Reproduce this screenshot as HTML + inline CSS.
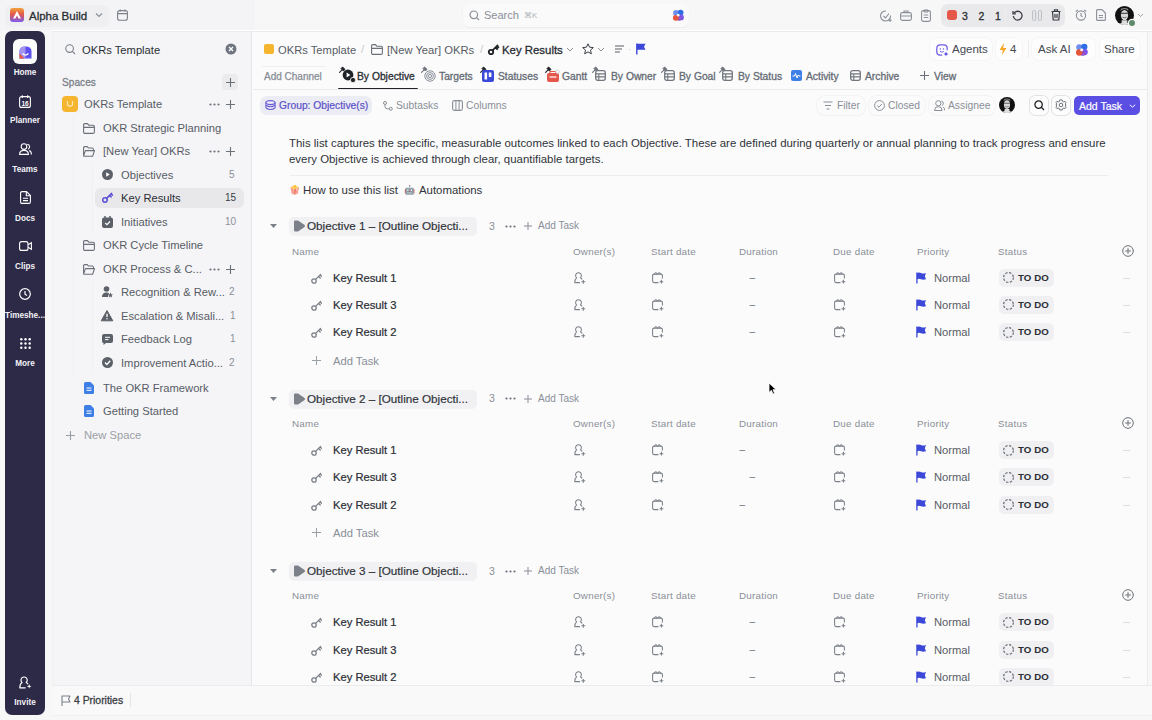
<!DOCTYPE html><html><head><meta charset="utf-8"><style>
html,body{margin:0;padding:0}
body{width:1152px;height:720px;overflow:hidden;position:relative;background:#f7f7f8;font-family:"Liberation Sans",sans-serif;}
.a{position:absolute;white-space:nowrap}
svg.a{overflow:visible}
</style></head><body>
<div class="a" style="left:0px;top:0px;width:255px;height:30px;background:#f4f4f6;"></div>
<div class="a" style="left:5px;top:5px;width:104px;height:22px;background:#efeff1;border-radius:6px"></div>
<svg class="a" style="left:10px;top:8px;" width="14" height="14" viewBox="0 0 14 14" fill="none"><defs><linearGradient id="lg" x1="0" y1="0" x2="0" y2="1"><stop offset="0" stop-color="#f2a33a"/><stop offset=".45" stop-color="#e2574c"/><stop offset="1" stop-color="#7b5cf0"/></linearGradient></defs><rect width="14" height="14" rx="3" fill="url(#lg)"/><path d="M7 3 L11 10.5 L8.6 10.5 L7 7.6 L5.4 10.5 L3 10.5Z" fill="#fff"/></svg>
<div class="a" style="left:29px;top:8.0px;font-size:11.5px;line-height:16px;font-weight:400;color:#2a2e34;-webkit-text-stroke:0.3px currentColor;">Alpha Build</div>
<svg class="a" style="left:95px;top:12px;" width="8" height="6" viewBox="0 0 8 6" fill="none"><path d="M1 1.5 L4 4.5 L7 1.5" stroke="#8a8f98" stroke-width="1.1"/></svg>
<svg class="a" style="left:117px;top:9px;" width="11" height="12" viewBox="0 0 11 12" fill="none"><rect x="0.6" y="1.6" width="9.8" height="9.6" rx="2" stroke="#7b8089" stroke-width="1.1"/><path d="M0.6 4.6 H10.4 M3.2 0.4 V2.4 M7.8 0.4 V2.4" stroke="#7b8089" stroke-width="1.1"/></svg>
<div class="a" style="left:463px;top:4px;width:226px;height:23px;background:#fafafa;border-radius:6px;box-shadow:0 0.5px 0 0.3px #ececee"></div>
<svg class="a" style="left:469px;top:10px;" width="11" height="11" viewBox="0 0 11 11" fill="none"><circle cx="4.8" cy="4.8" r="3.8" stroke="#8a8f98" stroke-width="1.2"/><path d="M7.6 7.6 L10 10" stroke="#8a8f98" stroke-width="1.2"/></svg>
<div class="a" style="left:484px;top:8.0px;font-size:11px;line-height:15px;font-weight:400;color:#8a8f98;">Search</div>
<div class="a" style="left:524px;top:10.0px;font-size:8px;line-height:11px;font-weight:400;color:#b0b4ba;">⌘K</div>
<svg class="a" style="left:672px;top:9px;" width="12.5" height="12.5" viewBox="0 0 12.5 12.5" fill="none"><g transform="scale(1.0)"><circle cx="4" cy="4" r="2.9" fill="#6f8ff0"/><circle cx="8.6" cy="3.6" r="2.9" fill="#2f6de6"/><circle cx="9" cy="8.4" r="2.9" fill="#7c55ea"/><circle cx="7" cy="9.4" r="2.4" fill="#9152c8"/><circle cx="3.8" cy="8.8" r="2.9" fill="#e4553a"/><circle cx="6.2" cy="6.2" r="1.4" fill="#f4f2ff"/></g></svg>
<svg class="a" style="left:880px;top:10px;" width="12" height="12" viewBox="0 0 12 12" fill="none"><path d="M10.5 5.5 A5 5 0 1 1 6 1" stroke="#8a8f98" stroke-width="1.1"/><path d="M3.5 6 L5.5 8 L9 3.5" stroke="#8a8f98" stroke-width="1.1"/><path d="M10 8.5 V12 M8.3 10.2 H11.7" stroke="#8a8f98" stroke-width="1.1"/></svg>
<svg class="a" style="left:900px;top:10px;" width="12" height="11" viewBox="0 0 12 11" fill="none"><rect x="0.6" y="2.6" width="10.8" height="7.8" rx="1.8" stroke="#8a8f98" stroke-width="1.1"/><path d="M4 2.6 V1 H8 V2.6 M0.6 6 H11.4" stroke="#8a8f98" stroke-width="1.1"/></svg>
<svg class="a" style="left:921px;top:9px;" width="10" height="13" viewBox="0 0 10 13" fill="none"><rect x="0.6" y="1.6" width="8.8" height="10.8" rx="1.6" stroke="#8a8f98" stroke-width="1.1"/><path d="M3 1 H7 V3 H3Z M2.8 6 H7.2 M2.8 8.5 H7.2" stroke="#8a8f98" stroke-width="1"/></svg>
<div class="a" style="left:941px;top:4px;width:124px;height:23px;background:#e9e9eb;border-radius:7px"></div>
<div class="a" style="left:1005px;top:4px;width:1px;height:23px;background:#ededef;"></div>
<div class="a" style="left:947px;top:10px;width:10px;height:10px;background:#e5574b;border-radius:3px"></div>
<div class="a" style="left:962px;top:8.5px;font-size:10.5px;line-height:15px;font-weight:400;color:#2a2e34;-webkit-text-stroke:0.3px currentColor;">3</div>
<div class="a" style="left:978.5px;top:8.5px;font-size:10.5px;line-height:15px;font-weight:400;color:#2a2e34;-webkit-text-stroke:0.3px currentColor;">2</div>
<div class="a" style="left:995px;top:8.5px;font-size:10.5px;line-height:15px;font-weight:400;color:#2a2e34;-webkit-text-stroke:0.3px currentColor;">1</div>
<svg class="a" style="left:1012px;top:10px;" width="11" height="11" viewBox="0 0 11 11" fill="none"><path d="M2 3.2 A4.4 4.4 0 1 1 1.3 6.2" stroke="#3a3e44" stroke-width="1.3"/><path d="M1 1 V3.8 H3.8" stroke="#3a3e44" stroke-width="1.3"/></svg>
<svg class="a" style="left:1032px;top:10px;" width="10" height="11" viewBox="0 0 10 11" fill="none"><rect x="0.6" y="0.6" width="3" height="9.8" rx="1" stroke="#b9bcc2" stroke-width="1"/><rect x="6.4" y="0.6" width="3" height="9.8" rx="1" stroke="#b9bcc2" stroke-width="1"/></svg>
<svg class="a" style="left:1051px;top:9px;" width="10" height="12" viewBox="0 0 10 12" fill="none"><path d="M0.5 2.5 H9.5 M3.5 2.5 V0.8 H6.5 V2.5 M1.5 2.5 L2.2 11 H7.8 L8.5 2.5 M4 5 V9 M6 5 V9" stroke="#3a3e44" stroke-width="1.2"/></svg>
<svg class="a" style="left:1075px;top:9px;" width="12" height="12" viewBox="0 0 12 12" fill="none"><circle cx="6" cy="6.5" r="4.6" stroke="#8a8f98" stroke-width="1.1"/><path d="M6 4 V6.7 L7.6 7.8 M0.8 2.5 L2.8 0.8 M11.2 2.5 L9.2 0.8" stroke="#8a8f98" stroke-width="1.1"/></svg>
<svg class="a" style="left:1096px;top:9px;" width="10" height="12" viewBox="0 0 10 12" fill="none"><path d="M0.6 1.6 Q0.6 0.6 1.6 0.6 H6 L9.4 4 V10.4 Q9.4 11.4 8.4 11.4 H1.6 Q0.6 11.4 0.6 10.4Z" stroke="#8a8f98" stroke-width="1.1"/><path d="M2.8 6.5 H7 M2.8 8.6 H7" stroke="#8a8f98" stroke-width="1"/></svg>
<svg class="a" style="left:1115px;top:5.5px;" width="19" height="19" viewBox="0 0 19 19" fill="none"><defs><clipPath id="avc1115"><circle cx="10" cy="10" r="10"/></clipPath></defs><g transform="scale(0.95)" clip-path="url(#avc1115)"><rect width="20" height="20" fill="#111"/><path d="M3 20 Q10 14 17 20Z" fill="#e6e6e6"/><rect x="7" y="15" width="6" height="5" fill="#ddd"/><ellipse cx="10" cy="9.5" rx="3.8" ry="5.4" fill="#d8d8d8"/><path d="M6.4 7.8 H13.6" stroke="#555" stroke-width="1.2"/><path d="M7.8 11.8 Q10 13 12.2 11.8" stroke="#666" stroke-width="0.9"/><path d="M6 5 Q10 1.5 14 5 L14 3.2 Q10 0.8 6 3.2Z" fill="#888"/></g></svg>
<div class="a" style="left:1128.5px;top:19.5px;width:6px;height:6px;background:#5f8a6c;border-radius:50%;box-shadow:0 0 0 1.2px #f6f6f7"></div>
<svg class="a" style="left:1137px;top:13px;" width="7" height="5" viewBox="0 0 7 5" fill="none"><path d="M1 1 L3.5 3.5 L6 1" stroke="#9a9ea5" stroke-width="1"/></svg>
<div class="a" style="left:5px;top:31px;width:40px;height:684px;background:#2d2a48;border-radius:7px"></div>
<div class="a" style="left:13px;top:39px;width:24px;height:25px;background:#fbfbfc;border-radius:6px"></div>
<svg class="a" style="left:19px;top:45.5px;" width="13" height="13" viewBox="0 0 13 13" fill="none"><path d="M0.5 12.5 V5.5 Q0.5 0.5 6.5 0.5 Q12.5 0.5 12.5 5.5 V12.5Z" fill="#5d50ef"/><path d="M0.5 12.5 V5.5 Q0.5 0.5 6.5 0.5 V12.5Z" fill="#a393f0"/><path d="M0.5 7.5 L5.5 12.5 H0.5Z" fill="#e85a3a"/><path d="M3.6 7.6 Q6.5 10.6 9.4 7.6" stroke="#fff" stroke-width="1.4"/></svg>
<div class="a" style="left:0px;top:67.7px;font-size:8.2px;line-height:10px;font-weight:700;color:#f2f2f6;width:50px;text-align:center">Home</div>
<svg class="a" style="left:19px;top:95px;" width="12" height="13" viewBox="0 0 12 13" fill="none"><rect x="0.6" y="1.6" width="10.8" height="10.8" rx="2" stroke="#fff" stroke-width="1.1"/><path d="M3.3 0.3 V3 M8.7 0.3 V3" stroke="#fff" stroke-width="1.1"/><text x="6" y="10.5" font-size="6.5" font-weight="700" fill="#fff" text-anchor="middle" font-family="Liberation Sans">16</text></svg>
<div class="a" style="left:0px;top:115.7px;font-size:8.2px;line-height:10px;font-weight:700;color:#f2f2f6;width:50px;text-align:center">Planner</div>
<svg class="a" style="left:19px;top:143px;" width="13" height="12" viewBox="0 0 13 12" fill="none"><circle cx="5" cy="3.6" r="2.8" stroke="#fff" stroke-width="1.1"/><path d="M0.6 11.4 Q0.6 7.4 5 7.4 Q9.4 7.4 9.4 11.4Z" stroke="#fff" stroke-width="1.1"/><path d="M8.2 1.2 A2.6 2.6 0 0 1 9 6.2 M10.2 7.6 Q12.4 8.4 12.4 11.4" stroke="#fff" stroke-width="1.1"/></svg>
<div class="a" style="left:0px;top:164.7px;font-size:8.2px;line-height:10px;font-weight:700;color:#f2f2f6;width:50px;text-align:center">Teams</div>
<svg class="a" style="left:20px;top:191px;" width="11" height="13" viewBox="0 0 11 13" fill="none"><path d="M0.6 2 Q0.6 0.6 2 0.6 H6.5 L10.4 4.5 V11 Q10.4 12.4 9 12.4 H2 Q0.6 12.4 0.6 11Z" stroke="#fff" stroke-width="1.1"/><path d="M6.3 0.8 V4.7 H10.2 M3 7.2 H8 M3 9.6 H8" stroke="#fff" stroke-width="1.1"/></svg>
<div class="a" style="left:0px;top:213.7px;font-size:8.2px;line-height:10px;font-weight:700;color:#f2f2f6;width:50px;text-align:center">Docs</div>
<svg class="a" style="left:19px;top:241px;" width="13" height="10" viewBox="0 0 13 10" fill="none"><rect x="0.6" y="0.6" width="8.4" height="8.8" rx="2" stroke="#fff" stroke-width="1.1"/><path d="M9 3.8 L12.4 1.8 V8.2 L9 6.2" stroke="#fff" stroke-width="1.1"/></svg>
<div class="a" style="left:0px;top:261.7px;font-size:8.2px;line-height:10px;font-weight:700;color:#f2f2f6;width:50px;text-align:center">Clips</div>
<svg class="a" style="left:19px;top:288px;" width="12" height="12" viewBox="0 0 12 12" fill="none"><circle cx="6" cy="6" r="5.3" stroke="#fff" stroke-width="1.2"/><path d="M6 3 V6.2 L8 7.6" stroke="#fff" stroke-width="1.2"/></svg>
<div class="a" style="left:0px;top:310.7px;font-size:8.2px;line-height:10px;font-weight:700;color:#f2f2f6;width:50px;text-align:center">Timeshe...</div>
<svg class="a" style="left:20px;top:338px;" width="11" height="11" viewBox="0 0 11 11" fill="none"><circle cx="1.3" cy="1.3" r="1.2" fill="#fff"/><circle cx="1.3" cy="5.5" r="1.2" fill="#fff"/><circle cx="1.3" cy="9.700000000000001" r="1.2" fill="#fff"/><circle cx="5.5" cy="1.3" r="1.2" fill="#fff"/><circle cx="5.5" cy="5.5" r="1.2" fill="#fff"/><circle cx="5.5" cy="9.700000000000001" r="1.2" fill="#fff"/><circle cx="9.700000000000001" cy="1.3" r="1.2" fill="#fff"/><circle cx="9.700000000000001" cy="5.5" r="1.2" fill="#fff"/><circle cx="9.700000000000001" cy="9.700000000000001" r="1.2" fill="#fff"/></svg>
<div class="a" style="left:0px;top:358.7px;font-size:8.2px;line-height:10px;font-weight:700;color:#f2f2f6;width:50px;text-align:center">More</div>
<svg class="a" style="left:19px;top:676px;" width="13" height="13" viewBox="0 0 13 13" fill="none"><path d="M3 6.4 A3.1 3.1 0 1 1 7.2 6.4 Q8.2 7 8.8 7.8 M3 6.4 Q0.8 7.8 0.8 11.8 H6.2" stroke="#fff" stroke-width="1.15" stroke-linejoin="round" stroke-linecap="round"/><path d="M10.2 8 L10.8 9.7 L12.5 10.3 L10.8 10.9 L10.2 12.6 L9.6 10.9 L7.9 10.3 L9.6 9.7Z" fill="#fff"/></svg>
<div class="a" style="left:0px;top:697.7px;font-size:8.2px;line-height:10px;font-weight:700;color:#f2f2f6;width:50px;text-align:center">Invite</div>
<div class="a" style="left:52px;top:32px;width:199px;height:653px;background:#f5f5f7;"></div>
<div class="a" style="left:52px;top:32px;width:1px;height:653px;background:#f0f0f2;"></div>
<div class="a" style="left:52px;top:30px;width:1100px;height:1px;background:#ffffff;"></div>
<div class="a" style="left:52px;top:31px;width:1100px;height:1px;background:#ebebee;"></div>
<div class="a" style="left:251px;top:32px;width:1px;height:653px;background:#e6e6e9;"></div>
<svg class="a" style="left:65px;top:44px;" width="11" height="11" viewBox="0 0 11 11" fill="none"><circle cx="4.6" cy="4.6" r="3.8" stroke="#7b8089" stroke-width="1.1"/><path d="M7.4 7.4 L10 10" stroke="#7b8089" stroke-width="1.1"/></svg>
<div class="a" style="left:82px;top:41.5px;font-size:11.2px;line-height:16px;font-weight:400;color:#2a2e34;">OKRs Template</div>
<svg class="a" style="left:225px;top:43px;" width="12" height="12" viewBox="0 0 12 12" fill="none"><circle cx="6" cy="6" r="5.5" fill="#707680"/><path d="M4 4 L8 8 M8 4 L4 8" stroke="#fff" stroke-width="1.3"/></svg>
<div class="a" style="left:62px;top:76.0px;font-size:10px;line-height:14px;font-weight:400;color:#7b8089;-webkit-text-stroke:0.3px currentColor;letter-spacing:0.1px">Spaces</div>
<div class="a" style="left:222px;top:74px;width:16px;height:16px;background:#ebebed;border-radius:4px"></div>
<svg class="a" style="left:225.5px;top:77.5px;" width="9" height="9" viewBox="0 0 9 9" fill="none"><path d="M4.5 0 V9 M0 4.5 H9" stroke="#6b7079" stroke-width="1.1"/></svg>
<div class="a" style="left:62px;top:96px;width:16px;height:16px;background:#f5b52e;border-radius:4px"></div>
<svg class="a" style="left:66px;top:100px;" width="8" height="8" viewBox="0 0 8 8" fill="none"><path d="M1.5 1 V5 Q4 7.5 6.5 5 V1" stroke="#fde7b0" stroke-width="1.2"/></svg>
<div class="a" style="left:84px;top:96.0px;font-size:11.2px;line-height:16px;font-weight:400;color:#575c65;">OKRs Template</div>
<svg class="a" style="left:209px;top:103px;" width="11" height="3" viewBox="0 0 11 3" fill="none"><circle cx="1.5" cy="1.5" r="1.1" fill="#6b7079"/><circle cx="5.5" cy="1.5" r="1.1" fill="#6b7079"/><circle cx="9.5" cy="1.5" r="1.1" fill="#6b7079"/></svg>
<svg class="a" style="left:225.5px;top:99.5px;" width="9" height="9" viewBox="0 0 9 9" fill="none"><path d="M4.5 0 V9 M0 4.5 H9" stroke="#6b7079" stroke-width="1.1"/></svg>
<div class="a" style="left:73px;top:116px;width:1px;height:260px;background:#f0f0f2;"></div>
<div class="a" style="left:92px;top:163px;width:1px;height:70px;background:#f0f0f2;"></div>
<div class="a" style="left:92px;top:281px;width:1px;height:92px;background:#f0f0f2;"></div>
<svg class="a" style="left:83px;top:122.5px;" width="12" height="11" viewBox="0 0 12 11" fill="none"><path d="M0.6 2 Q0.6 0.6 2 0.6 H4.4 L5.8 2.2 H10 Q11.4 2.2 11.4 3.6 V9 Q11.4 10.4 10 10.4 H2 Q0.6 10.4 0.6 9Z M0.6 4.4 H11.4" stroke="#6b7079" stroke-width="1.1"/></svg>
<div class="a" style="left:103px;top:120.0px;font-size:11.2px;line-height:16px;font-weight:400;color:#575c65;">OKR Strategic Planning</div>
<svg class="a" style="left:83px;top:145.5px;" width="12" height="11" viewBox="0 0 12 11" fill="none"><path d="M0.6 9.5 V1.8 Q0.6 0.6 1.8 0.6 H4.2 L5.5 2 H9.2 Q10.4 2 10.4 3.2 V4.5" stroke="#6b7079" stroke-width="1.1"/><path d="M0.6 9.8 L2.4 4.6 H11.5 L9.6 10.2 H0.9Z" stroke="#6b7079" stroke-width="1.1" stroke-linejoin="round"/></svg>
<div class="a" style="left:103px;top:143.0px;font-size:11.2px;line-height:16px;font-weight:400;color:#575c65;">[New Year] OKRs</div>
<svg class="a" style="left:209px;top:150px;" width="11" height="3" viewBox="0 0 11 3" fill="none"><circle cx="1.5" cy="1.5" r="1.1" fill="#6b7079"/><circle cx="5.5" cy="1.5" r="1.1" fill="#6b7079"/><circle cx="9.5" cy="1.5" r="1.1" fill="#6b7079"/></svg>
<svg class="a" style="left:225.5px;top:146.5px;" width="9" height="9" viewBox="0 0 9 9" fill="none"><path d="M4.5 0 V9 M0 4.5 H9" stroke="#6b7079" stroke-width="1.1"/></svg>
<svg class="a" style="left:102px;top:169px;" width="11" height="11" viewBox="0 0 11 11" fill="none"><circle cx="5.5" cy="5.5" r="5.5" fill="#5c6169"/><path d="M4.2 3.2 L7.8 5.5 L4.2 7.8Z" fill="#fff"/></svg>
<div class="a" style="left:121px;top:167.0px;font-size:11.2px;line-height:16px;font-weight:400;color:#575c65;">Objectives</div>
<div class="a" style="left:229px;top:168.0px;font-size:10px;line-height:14px;font-weight:400;color:#8a8f98;">5</div>
<div class="a" style="left:95px;top:188px;width:149px;height:20px;background:#e8e8eb;border-radius:6px"></div>
<svg class="a" style="left:102px;top:192px;" width="11" height="11" viewBox="0 0 11 11" fill="none"><g transform="scale(1.0)"><circle cx="3" cy="8" r="2.2" stroke="#5a4fd6" stroke-width="1.5"/><path d="M4.6 6.4 L9.6 1.4 M7.6 3.4 L9.2 5 M9 1.9 L10.4 3.3" stroke="#5a4fd6" stroke-width="1.5" stroke-linecap="round"/></g></svg>
<div class="a" style="left:121px;top:190.0px;font-size:11.2px;line-height:16px;font-weight:400;color:#2a2e34;">Key Results</div>
<div class="a" style="left:225px;top:191.0px;font-size:10px;line-height:14px;font-weight:400;color:#3a3e44;">15</div>
<svg class="a" style="left:102px;top:216px;" width="11" height="12" viewBox="0 0 11 12" fill="none"><rect x="0" y="1.5" width="11" height="10.5" rx="2" fill="#5c6169"/><path d="M3 0 V3 M8 0 V3" stroke="#5c6169" stroke-width="1.5"/><path d="M3.2 7 L5 8.7 L8 5.5" stroke="#fff" stroke-width="1.2"/></svg>
<div class="a" style="left:121px;top:214.0px;font-size:11.2px;line-height:16px;font-weight:400;color:#575c65;">Initiatives</div>
<div class="a" style="left:225px;top:215.0px;font-size:10px;line-height:14px;font-weight:400;color:#8a8f98;">10</div>
<svg class="a" style="left:83px;top:239.5px;" width="12" height="11" viewBox="0 0 12 11" fill="none"><path d="M0.6 2 Q0.6 0.6 2 0.6 H4.4 L5.8 2.2 H10 Q11.4 2.2 11.4 3.6 V9 Q11.4 10.4 10 10.4 H2 Q0.6 10.4 0.6 9Z M0.6 4.4 H11.4" stroke="#6b7079" stroke-width="1.1"/></svg>
<div class="a" style="left:103px;top:237.0px;font-size:11.2px;line-height:16px;font-weight:400;color:#575c65;">OKR Cycle Timeline</div>
<svg class="a" style="left:83px;top:263.5px;" width="12" height="11" viewBox="0 0 12 11" fill="none"><path d="M0.6 9.5 V1.8 Q0.6 0.6 1.8 0.6 H4.2 L5.5 2 H9.2 Q10.4 2 10.4 3.2 V4.5" stroke="#6b7079" stroke-width="1.1"/><path d="M0.6 9.8 L2.4 4.6 H11.5 L9.6 10.2 H0.9Z" stroke="#6b7079" stroke-width="1.1" stroke-linejoin="round"/></svg>
<div class="a" style="left:103px;top:261.0px;font-size:11.2px;line-height:16px;font-weight:400;color:#575c65;">OKR Process &amp; C...</div>
<svg class="a" style="left:209px;top:268px;" width="11" height="3" viewBox="0 0 11 3" fill="none"><circle cx="1.5" cy="1.5" r="1.1" fill="#6b7079"/><circle cx="5.5" cy="1.5" r="1.1" fill="#6b7079"/><circle cx="9.5" cy="1.5" r="1.1" fill="#6b7079"/></svg>
<svg class="a" style="left:225.5px;top:264.5px;" width="9" height="9" viewBox="0 0 9 9" fill="none"><path d="M4.5 0 V9 M0 4.5 H9" stroke="#6b7079" stroke-width="1.1"/></svg>
<svg class="a" style="left:102px;top:286px;" width="11" height="12" viewBox="0 0 11 12" fill="none"><circle cx="4.5" cy="3" r="2.8" fill="#5c6169"/><path d="M0 11 Q0 6.5 4.5 6.5 Q6 6.5 7 7 L6 11Z" fill="#5c6169"/><path d="M8.5 6.5 L9.3 8.2 L11 8.4 L9.7 9.6 L10 11.4 L8.5 10.5 L7 11.4 L7.3 9.6 L6 8.4 L7.7 8.2Z" fill="#5c6169"/></svg>
<div class="a" style="left:121px;top:284.0px;font-size:11.2px;line-height:16px;font-weight:400;color:#575c65;">Recognition &amp; Rew...</div>
<div class="a" style="left:229px;top:285.0px;font-size:10px;line-height:14px;font-weight:400;color:#8a8f98;">2</div>
<svg class="a" style="left:101px;top:310px;" width="12" height="11" viewBox="0 0 12 11" fill="none"><path d="M6 0.5 L11.8 10.8 H0.2Z" fill="#5c6169" stroke="#5c6169" stroke-linejoin="round"/><path d="M6 3.8 V7" stroke="#fff" stroke-width="1.3"/><circle cx="6" cy="8.8" r="0.75" fill="#fff"/></svg>
<div class="a" style="left:121px;top:308.0px;font-size:11.2px;line-height:16px;font-weight:400;color:#575c65;">Escalation &amp; Misali...</div>
<div class="a" style="left:230px;top:309.0px;font-size:10px;line-height:14px;font-weight:400;color:#8a8f98;">1</div>
<svg class="a" style="left:102px;top:334px;" width="11" height="11" viewBox="0 0 11 11" fill="none"><path d="M0 2 Q0 0 2 0 H9 Q11 0 11 2 V7 Q11 9 9 9 H4 L1.5 11 V9 Q0 9 0 7Z" fill="#5c6169"/><path d="M3 3.3 H8 M3 5.6 H6.5" stroke="#fff" stroke-width="1"/></svg>
<div class="a" style="left:121px;top:331.0px;font-size:11.2px;line-height:16px;font-weight:400;color:#575c65;">Feedback Log</div>
<div class="a" style="left:230px;top:332.0px;font-size:10px;line-height:14px;font-weight:400;color:#8a8f98;">1</div>
<svg class="a" style="left:102px;top:357px;" width="11" height="11" viewBox="0 0 11 11" fill="none"><circle cx="5.5" cy="5.5" r="5.5" fill="#5c6169"/><path d="M3 5.6 L4.9 7.4 L8.2 3.8" stroke="#fff" stroke-width="1.4"/></svg>
<div class="a" style="left:121px;top:355.0px;font-size:11.2px;line-height:16px;font-weight:400;color:#575c65;">Improvement Actio...</div>
<div class="a" style="left:229px;top:356.0px;font-size:10px;line-height:14px;font-weight:400;color:#8a8f98;">2</div>
<svg class="a" style="left:84px;top:382px;" width="10" height="12" viewBox="0 0 10 12" fill="none"><path d="M0 1.5 Q0 0 1.5 0 H6.5 L10 3.5 V10.5 Q10 12 8.5 12 H1.5 Q0 12 0 10.5Z" fill="#3d7fe6"/><path d="M2.5 6 H7.5 M2.5 8.3 H7.5" stroke="#fff" stroke-width="1"/></svg>
<div class="a" style="left:103px;top:380.0px;font-size:11.2px;line-height:16px;font-weight:400;color:#575c65;">The OKR Framework</div>
<svg class="a" style="left:84px;top:405px;" width="10" height="12" viewBox="0 0 10 12" fill="none"><path d="M0 1.5 Q0 0 1.5 0 H6.5 L10 3.5 V10.5 Q10 12 8.5 12 H1.5 Q0 12 0 10.5Z" fill="#3d7fe6"/><path d="M2.5 6 H7.5 M2.5 8.3 H7.5" stroke="#fff" stroke-width="1"/></svg>
<div class="a" style="left:103px;top:403.0px;font-size:11.2px;line-height:16px;font-weight:400;color:#575c65;">Getting Started</div>
<svg class="a" style="left:65.5px;top:430.5px;" width="9" height="9" viewBox="0 0 9 9" fill="none"><path d="M4.5 0 V9 M0 4.5 H9" stroke="#9a9ea5" stroke-width="1.1"/></svg>
<div class="a" style="left:84px;top:427.0px;font-size:11.2px;line-height:16px;font-weight:400;color:#9a9ea5;">New Space</div>
<div class="a" style="left:52px;top:685px;width:1100px;height:1px;background:#ececee;"></div>
<svg class="a" style="left:61px;top:695px;" width="10" height="11" viewBox="0 0 10 11" fill="none"><path d="M1 11 V1 H9 L7.5 4 L9 7 H1" stroke="#7b8089" stroke-width="1.1" stroke-linejoin="round"/></svg>
<div class="a" style="left:74px;top:692.5px;font-size:10.4px;line-height:15px;font-weight:400;color:#3a3e44;-webkit-text-stroke:0.3px currentColor;">4 Priorities</div>
<div class="a" style="left:130px;top:693px;width:1px;height:14px;background:#e3e3e6;"></div>
<div class="a" style="left:52px;top:715px;width:1100px;height:1px;background:#f0f0f2;"></div>
<div class="a" style="left:252px;top:32px;width:895px;height:653px;background:#fbfbfb;"></div>
<div class="a" style="left:1147px;top:32px;width:1px;height:653px;background:#ebebee;"></div>
<div class="a" style="left:264px;top:44px;width:10px;height:10px;background:#f5b52e;border-radius:2px"></div>
<div class="a" style="left:278px;top:41.5px;font-size:11.2px;line-height:16px;font-weight:400;color:#575c65;">OKRs Template</div>
<div class="a" style="left:361px;top:42.0px;font-size:11px;line-height:15px;font-weight:400;color:#c5c8cd;">/</div>
<svg class="a" style="left:371px;top:44.0px;" width="12" height="11" viewBox="0 0 12 11" fill="none"><path d="M0.6 2 Q0.6 0.6 2 0.6 H4.4 L5.8 2.2 H10 Q11.4 2.2 11.4 3.6 V9 Q11.4 10.4 10 10.4 H2 Q0.6 10.4 0.6 9Z M0.6 4.4 H11.4" stroke="#6b7079" stroke-width="1.1"/></svg>
<div class="a" style="left:387px;top:41.5px;font-size:11.2px;line-height:16px;font-weight:400;color:#575c65;">[New Year] OKRs</div>
<div class="a" style="left:480px;top:42.0px;font-size:11px;line-height:15px;font-weight:400;color:#c5c8cd;">/</div>
<svg class="a" style="left:488px;top:44px;" width="11" height="11" viewBox="0 0 11 11" fill="none"><g transform="scale(1.0)"><circle cx="3" cy="8" r="2.2" stroke="#1f2226" stroke-width="1.8"/><path d="M4.6 6.4 L9.6 1.4 M7.6 3.4 L9.2 5 M9 1.9 L10.4 3.3" stroke="#1f2226" stroke-width="1.8" stroke-linecap="round"/></g></svg>
<div class="a" style="left:502px;top:41.5px;font-size:11.4px;line-height:16px;font-weight:400;color:#2a2e34;-webkit-text-stroke:0.3px currentColor;">Key Results</div>
<svg class="a" style="left:566px;top:47px;" width="8" height="5" viewBox="0 0 8 5" fill="none"><path d="M1 1 L4 4 L7 1" stroke="#8a8f98" stroke-width="1"/></svg>
<svg class="a" style="left:582px;top:43px;" width="12" height="12" viewBox="0 0 12 12" fill="none"><path d="M6 0.8 L7.6 4.2 L11.3 4.6 L8.5 7.1 L9.3 10.8 L6 8.9 L2.7 10.8 L3.5 7.1 L0.7 4.6 L4.4 4.2Z" stroke="#3a3e44" stroke-width="1" stroke-linejoin="round"/></svg>
<svg class="a" style="left:597px;top:47px;" width="8" height="5" viewBox="0 0 8 5" fill="none"><path d="M1 1 L4 4 L7 1" stroke="#8a8f98" stroke-width="1"/></svg>
<svg class="a" style="left:615px;top:45px;" width="9" height="8" viewBox="0 0 9 8" fill="none"><path d="M0 1 H9 M0 4 H7 M0 7 H5" stroke="#5c6169" stroke-width="1.1"/></svg>
<div class="a" style="left:629px;top:49px;width:1.4px;height:1.4px;background:#b5b8bd;border-radius:50%"></div>
<svg class="a" style="left:636px;top:43px;" width="10" height="12" viewBox="0 0 10 12" fill="none"><path d="M0.8 0.5 V11.5" stroke="#3b48d8" stroke-width="1.4"/><path d="M1 0.8 H9.5 L8 3.8 L9.5 6.8 H1Z" fill="#3b48d8"/></svg>
<div class="a" style="left:930px;top:38px;width:62px;height:22px;background:#fdfdfd;border-radius:6px;box-shadow:0 0 0 0.5px #f0f0f2"></div>
<svg class="a" style="left:936px;top:43.5px;" width="13" height="12" viewBox="0 0 13 12" fill="none"><path d="M11.2 6.2 V4.2 Q11.2 0.8 7.8 0.8 H4.2 Q0.8 0.8 0.8 4.2 V7.8 Q0.8 11.2 4.2 11.2 H6.2" stroke="#6e5ce8" stroke-width="1.25"/><circle cx="4.3" cy="4.9" r="0.75" fill="#6e5ce8"/><circle cx="7.5" cy="4.9" r="0.75" fill="#6e5ce8"/><path d="M4 7.4 Q5.9 9 7.8 7.4" stroke="#6e5ce8" stroke-width="1"/><path d="M10 7.4 L10.7 9.3 L12.6 10 L10.7 10.7 L10 12.6 L9.3 10.7 L7.4 10 L9.3 9.3Z" fill="#5546e0"/></svg>
<div class="a" style="left:952px;top:41.0px;font-size:11.5px;line-height:16px;font-weight:400;color:#454a52;">Agents</div>
<div class="a" style="left:996px;top:38px;width:26px;height:22px;background:#fdfdfd;border-radius:6px;box-shadow:0 0 0 0.5px #f0f0f2"></div>
<svg class="a" style="left:999px;top:43px;" width="8" height="12" viewBox="0 0 8 12" fill="none"><path d="M5 0 L0.5 7 H3.8 L3 12 L7.5 5 H4.2Z" fill="#f5a623"/></svg>
<div class="a" style="left:1010px;top:41.0px;font-size:11.5px;line-height:16px;font-weight:400;color:#454a52;">4</div>
<div class="a" style="left:1028px;top:40px;width:1px;height:18px;background:#ededf0;"></div>
<div class="a" style="left:1032px;top:38px;width:63px;height:22px;background:#fdfdfd;border-radius:6px;box-shadow:0 0 0 0.5px #f0f0f2"></div>
<div class="a" style="left:1038px;top:41.0px;font-size:11.5px;line-height:16px;font-weight:400;color:#454a52;">Ask AI</div>
<svg class="a" style="left:1075px;top:42.5px;" width="13.5" height="13.5" viewBox="0 0 13.5 13.5" fill="none"><g transform="scale(1.08)"><circle cx="4" cy="4" r="2.9" fill="#6f8ff0"/><circle cx="8.6" cy="3.6" r="2.9" fill="#2f6de6"/><circle cx="9" cy="8.4" r="2.9" fill="#7c55ea"/><circle cx="7" cy="9.4" r="2.4" fill="#9152c8"/><circle cx="3.8" cy="8.8" r="2.9" fill="#e4553a"/><circle cx="6.2" cy="6.2" r="1.4" fill="#f4f2ff"/></g></svg>
<div class="a" style="left:1100px;top:38px;width:40px;height:22px;background:#fdfdfd;border-radius:6px;box-shadow:0 0 0 0.5px #f0f0f2"></div>
<div class="a" style="left:1104px;top:41.0px;font-size:11.5px;line-height:16px;font-weight:400;color:#454a52;">Share</div>
<div class="a" style="left:262px;top:66px;width:64px;height:1px;background:#efeff1;"></div>
<div class="a" style="left:264px;top:70.0px;font-size:10px;line-height:14px;font-weight:400;color:#878c94;-webkit-text-stroke:0.25px currentColor;">Add Channel</div>
<svg class="a" style="left:339px;top:66px;" width="7" height="7" viewBox="0 0 7 7" fill="none"><path d="M0.6 6.4 L2.8 4.2" stroke="#1f2226" stroke-width="1.1" stroke-linecap="round"/><path d="M2 2.6 L3.6 1 L6 3.4 L4.4 5Z" fill="#1f2226" stroke="#1f2226" stroke-width="1" stroke-linejoin="round"/></svg>
<svg class="a" style="left:342px;top:69px;" width="14" height="14" viewBox="0 0 14 14" fill="none"><circle cx="6" cy="6" r="5.4" fill="#1f2226"/><path d="M4.6 3.5 L8.4 6 L4.6 8.5Z" fill="#fff"/><circle cx="11" cy="11" r="2.6" fill="#1f2226" stroke="#fdfdfd" stroke-width="0.8"/></svg>
<div class="a" style="left:357px;top:70.0px;font-size:10.3px;line-height:14px;font-weight:400;color:#2a2e34;-webkit-text-stroke:0.3px currentColor;">By Objective</div>
<div class="a" style="left:338px;top:88px;width:80px;height:2px;background:#1f2226;border-radius:1px"></div>
<svg class="a" style="left:421px;top:66px;" width="7" height="7" viewBox="0 0 7 7" fill="none"><path d="M0.6 6.4 L2.8 4.2" stroke="#6b7079" stroke-width="1.1" stroke-linecap="round"/><path d="M2 2.6 L3.6 1 L6 3.4 L4.4 5Z" fill="#6b7079" stroke="#6b7079" stroke-width="1" stroke-linejoin="round"/></svg>
<svg class="a" style="left:424px;top:70px;" width="12" height="12" viewBox="0 0 12 12" fill="none"><circle cx="6" cy="6" r="5.2" stroke="#8a8f98" stroke-width="1"/><circle cx="6" cy="6" r="3.4" stroke="#8a8f98" stroke-width="1"/><circle cx="6" cy="6" r="1.6" stroke="#8a8f98" stroke-width="1"/></svg>
<div class="a" style="left:439px;top:70.0px;font-size:10.3px;line-height:14px;font-weight:400;color:#656b74;-webkit-text-stroke:0.3px currentColor;">Targets</div>
<svg class="a" style="left:480px;top:66px;" width="7" height="7" viewBox="0 0 7 7" fill="none"><path d="M0.6 6.4 L2.8 4.2" stroke="#1f2226" stroke-width="1.1" stroke-linecap="round"/><path d="M2 2.6 L3.6 1 L6 3.4 L4.4 5Z" fill="#1f2226" stroke="#1f2226" stroke-width="1" stroke-linejoin="round"/></svg>
<svg class="a" style="left:482px;top:70px;" width="12" height="12" viewBox="0 0 12 12" fill="none"><rect x="0" y="0" width="12" height="12" rx="2" fill="#3b48d8"/><rect x="2.5" y="2.5" width="2.6" height="7" fill="#fff"/><rect x="6.8" y="2.5" width="2.6" height="4.5" fill="#fff"/></svg>
<div class="a" style="left:498px;top:70.0px;font-size:10.3px;line-height:14px;font-weight:400;color:#656b74;-webkit-text-stroke:0.3px currentColor;">Statuses</div>
<svg class="a" style="left:545px;top:66px;" width="7" height="7" viewBox="0 0 7 7" fill="none"><path d="M0.6 6.4 L2.8 4.2" stroke="#1f2226" stroke-width="1.1" stroke-linecap="round"/><path d="M2 2.6 L3.6 1 L6 3.4 L4.4 5Z" fill="#1f2226" stroke="#1f2226" stroke-width="1" stroke-linejoin="round"/></svg>
<svg class="a" style="left:547px;top:70px;" width="12" height="12" viewBox="0 0 12 12" fill="none"><rect x="0" y="3" width="12" height="9" rx="2" fill="#e5574b"/><path d="M3 3 V1.5 H9 V3" stroke="#e5574b" stroke-width="1.2"/><path d="M2.5 7 H9.5" stroke="#fff" stroke-width="1.2"/><circle cx="10.5" cy="1.8" r="1.8" fill="#fdfdfd" stroke="#b0b4ba" stroke-width="0.6"/></svg>
<div class="a" style="left:562px;top:70.0px;font-size:10.3px;line-height:14px;font-weight:400;color:#656b74;-webkit-text-stroke:0.3px currentColor;">Gantt</div>
<svg class="a" style="left:592px;top:66px;" width="7" height="7" viewBox="0 0 7 7" fill="none"><path d="M0.6 6.4 L2.8 4.2" stroke="#6b7079" stroke-width="1.1" stroke-linecap="round"/><path d="M2 2.6 L3.6 1 L6 3.4 L4.4 5Z" fill="#6b7079" stroke="#6b7079" stroke-width="1" stroke-linejoin="round"/></svg>
<svg class="a" style="left:595px;top:70px;" width="11" height="11" viewBox="0 0 11 11" fill="none"><rect x="0.7" y="0.7" width="9.6" height="9.6" rx="2" stroke="#72777f" stroke-width="1.3"/><path d="M0.7 3.9 H10.3 M0.7 6.9 H10.3 M3.8 3.9 V10.3" stroke="#72777f" stroke-width="1.1"/></svg>
<div class="a" style="left:611px;top:70.0px;font-size:10.3px;line-height:14px;font-weight:400;color:#656b74;-webkit-text-stroke:0.3px currentColor;">By Owner</div>
<svg class="a" style="left:661px;top:66px;" width="7" height="7" viewBox="0 0 7 7" fill="none"><path d="M0.6 6.4 L2.8 4.2" stroke="#6b7079" stroke-width="1.1" stroke-linecap="round"/><path d="M2 2.6 L3.6 1 L6 3.4 L4.4 5Z" fill="#6b7079" stroke="#6b7079" stroke-width="1" stroke-linejoin="round"/></svg>
<svg class="a" style="left:664px;top:70px;" width="11" height="11" viewBox="0 0 11 11" fill="none"><rect x="0.7" y="0.7" width="9.6" height="9.6" rx="2" stroke="#72777f" stroke-width="1.3"/><path d="M0.7 3.9 H10.3 M0.7 6.9 H10.3 M3.8 3.9 V10.3" stroke="#72777f" stroke-width="1.1"/></svg>
<div class="a" style="left:679px;top:70.0px;font-size:10.3px;line-height:14px;font-weight:400;color:#656b74;-webkit-text-stroke:0.3px currentColor;">By Goal</div>
<svg class="a" style="left:719px;top:66px;" width="7" height="7" viewBox="0 0 7 7" fill="none"><path d="M0.6 6.4 L2.8 4.2" stroke="#6b7079" stroke-width="1.1" stroke-linecap="round"/><path d="M2 2.6 L3.6 1 L6 3.4 L4.4 5Z" fill="#6b7079" stroke="#6b7079" stroke-width="1" stroke-linejoin="round"/></svg>
<svg class="a" style="left:722px;top:70px;" width="11" height="11" viewBox="0 0 11 11" fill="none"><rect x="0.7" y="0.7" width="9.6" height="9.6" rx="2" stroke="#72777f" stroke-width="1.3"/><path d="M0.7 3.9 H10.3 M0.7 6.9 H10.3 M3.8 3.9 V10.3" stroke="#72777f" stroke-width="1.1"/></svg>
<div class="a" style="left:738px;top:70.0px;font-size:10.3px;line-height:14px;font-weight:400;color:#656b74;-webkit-text-stroke:0.3px currentColor;">By Status</div>
<svg class="a" style="left:791px;top:70px;" width="11" height="11" viewBox="0 0 11 11" fill="none"><rect width="11" height="11" rx="2" fill="#3d7fe6"/><path d="M1.5 6 H3.5 L4.5 3.5 L6 8 L7.2 5 L8 6 H9.5" stroke="#fff" stroke-width="1"/></svg>
<div class="a" style="left:806px;top:70.0px;font-size:10.3px;line-height:14px;font-weight:400;color:#656b74;-webkit-text-stroke:0.3px currentColor;">Activity</div>
<svg class="a" style="left:850px;top:70px;" width="11" height="11" viewBox="0 0 11 11" fill="none"><rect x="0.7" y="0.7" width="9.6" height="9.6" rx="2" stroke="#72777f" stroke-width="1.3"/><path d="M0.7 3.9 H10.3 M0.7 6.9 H10.3 M3.8 3.9 V10.3" stroke="#72777f" stroke-width="1.1"/></svg>
<div class="a" style="left:865px;top:70.0px;font-size:10.3px;line-height:14px;font-weight:400;color:#656b74;-webkit-text-stroke:0.3px currentColor;">Archive</div>
<svg class="a" style="left:920px;top:71px;" width="9" height="9" viewBox="0 0 9 9" fill="none"><path d="M4.5 0 V9 M0 4.5 H9" stroke="#6b7079" stroke-width="1.1"/></svg>
<div class="a" style="left:934px;top:70.0px;font-size:10.3px;line-height:14px;font-weight:400;color:#656b74;-webkit-text-stroke:0.3px currentColor;">View</div>
<div class="a" style="left:253px;top:89px;width:895px;height:1px;background:#ebebee;"></div>
<div class="a" style="left:260px;top:96px;width:112px;height:19px;background:#ececf4;border-radius:7px"></div>
<svg class="a" style="left:265px;top:100px;" width="11" height="11" viewBox="0 0 11 11" fill="none"><ellipse cx="5.5" cy="2.6" rx="4.6" ry="2" stroke="#6a5cd6" stroke-width="1.1"/><path d="M0.9 5.3 Q5.5 8.3 10.1 5.3 M0.9 8 Q5.5 11 10.1 8 M0.9 2.6 V8 M10.1 2.6 V8" stroke="#6a5cd6" stroke-width="1.1"/></svg>
<div class="a" style="left:279px;top:98.5px;font-size:10.3px;line-height:14px;font-weight:400;color:#5b50c8;-webkit-text-stroke:0.2px currentColor;">Group: Objective(s)</div>
<svg class="a" style="left:383px;top:101px;" width="10" height="10" viewBox="0 0 10 10" fill="none"><circle cx="2" cy="2" r="1.5" stroke="#8a8f98" stroke-width="1"/><circle cx="7.8" cy="7.8" r="1.5" stroke="#8a8f98" stroke-width="1"/><path d="M2 3.5 V5.5 Q2 7.8 4.2 7.8 H6.3" stroke="#8a8f98" stroke-width="1"/></svg>
<div class="a" style="left:396px;top:98.5px;font-size:10.3px;line-height:14px;font-weight:400;color:#8a8f98;">Subtasks</div>
<svg class="a" style="left:452px;top:100px;" width="11" height="11" viewBox="0 0 11 11" fill="none"><rect x="0.6" y="0.6" width="9.8" height="9.8" rx="1.8" stroke="#8a8f98" stroke-width="1.1"/><path d="M3.9 0.6 V10.4 M7.1 0.6 V10.4" stroke="#8a8f98" stroke-width="1"/></svg>
<div class="a" style="left:466px;top:98.5px;font-size:10.3px;line-height:14px;font-weight:400;color:#8a8f98;">Columns</div>
<div class="a" style="left:817px;top:96px;width:48px;height:19px;background:#fbfbfb;border-radius:7px;box-shadow:0 0 0 0.5px #ececef,0 1px 1px rgba(0,0,0,0.03)"></div>
<div class="a" style="left:869px;top:96px;width:56px;height:19px;background:#fbfbfb;border-radius:7px;box-shadow:0 0 0 0.5px #ececef,0 1px 1px rgba(0,0,0,0.03)"></div>
<div class="a" style="left:929px;top:96px;width:66px;height:19px;background:#fbfbfb;border-radius:7px;box-shadow:0 0 0 0.5px #ececef,0 1px 1px rgba(0,0,0,0.03)"></div>
<svg class="a" style="left:823px;top:101px;" width="10" height="9" viewBox="0 0 10 9" fill="none"><path d="M0.5 1 H9.5 M2 4.5 H8 M3.5 8 H6.5" stroke="#8a8f98" stroke-width="1.1"/></svg>
<div class="a" style="left:837px;top:98.5px;font-size:10.3px;line-height:14px;font-weight:400;color:#8a8f98;">Filter</div>
<svg class="a" style="left:874px;top:100px;" width="11" height="11" viewBox="0 0 11 11" fill="none"><circle cx="5.5" cy="5.5" r="4.9" stroke="#8a8f98" stroke-width="1"/><path d="M3.2 5.6 L4.9 7.2 L7.9 4" stroke="#8a8f98" stroke-width="1"/></svg>
<div class="a" style="left:888px;top:98.5px;font-size:10.3px;line-height:14px;font-weight:400;color:#8a8f98;">Closed</div>
<svg class="a" style="left:934px;top:100px;" width="11" height="11" viewBox="0 0 11 11" fill="none"><circle cx="4.3" cy="3.3" r="2.6" stroke="#8a8f98" stroke-width="1"/><path d="M0.5 10.5 Q0.5 6.6 4.3 6.6 Q8.1 6.6 8.1 10.5Z" stroke="#8a8f98" stroke-width="1"/><path d="M7.4 1 A2.4 2.4 0 0 1 7.8 5.6 M9.2 6.9 Q10.6 7.8 10.6 10.4" stroke="#8a8f98" stroke-width="1"/></svg>
<div class="a" style="left:948px;top:98.5px;font-size:10.3px;line-height:14px;font-weight:400;color:#8a8f98;">Assignee</div>
<svg class="a" style="left:999px;top:97px;" width="16" height="16" viewBox="0 0 16 16" fill="none"><defs><clipPath id="avc999"><circle cx="10" cy="10" r="10"/></clipPath></defs><g transform="scale(0.8)" clip-path="url(#avc999)"><rect width="20" height="20" fill="#111"/><path d="M3 20 Q10 14 17 20Z" fill="#e6e6e6"/><rect x="7" y="15" width="6" height="5" fill="#ddd"/><ellipse cx="10" cy="9.5" rx="3.8" ry="5.4" fill="#d8d8d8"/><path d="M6.4 7.8 H13.6" stroke="#555" stroke-width="1.2"/><path d="M7.8 11.8 Q10 13 12.2 11.8" stroke="#666" stroke-width="0.9"/><path d="M6 5 Q10 1.5 14 5 L14 3.2 Q10 0.8 6 3.2Z" fill="#888"/></g></svg>
<div class="a" style="left:1030px;top:96px;width:18px;height:19px;background:#fdfdfd;border-radius:5px;box-shadow:0 0 0 0.8px #dcdce0"></div>
<svg class="a" style="left:1034px;top:100px;" width="11" height="11" viewBox="0 0 11 11" fill="none"><circle cx="4.6" cy="4.6" r="3.7" stroke="#1f2226" stroke-width="1.3"/><path d="M7.3 7.3 L10 10" stroke="#1f2226" stroke-width="1.3"/></svg>
<div class="a" style="left:1052px;top:96px;width:18px;height:19px;background:#fdfdfd;border-radius:5px;box-shadow:0 0 0 0.8px #dcdce0"></div>
<svg class="a" style="left:1055px;top:99px;" width="12" height="12" viewBox="0 0 12 12" fill="none"><path d="M6 0.8 L7.2 1 L7.6 2.4 L8.8 3 L10.1 2.4 L11 3.5 L10.4 4.8 L10.8 6 L10.4 7.2 L11 8.5 L10.1 9.6 L8.8 9 L7.6 9.6 L7.2 11 H4.8 L4.4 9.6 L3.2 9 L1.9 9.6 L1 8.5 L1.6 7.2 L1.2 6 L1.6 4.8 L1 3.5 L1.9 2.4 L3.2 3 L4.4 2.4 L4.8 1Z" stroke="#5c6169" stroke-width="0.9" stroke-linejoin="round"/><circle cx="6" cy="6" r="1.8" stroke="#5c6169" stroke-width="0.9"/></svg>
<div class="a" style="left:1074px;top:96px;width:66px;height:19px;background:#5b4fe3;border-radius:5px"></div>
<div class="a" style="left:1079px;top:98.5px;font-size:10.5px;line-height:15px;font-weight:400;color:#ffffff;-webkit-text-stroke:0.2px currentColor;">Add Task</div>
<svg class="a" style="left:1129px;top:104px;" width="7" height="4" viewBox="0 0 7 4" fill="none"><path d="M0.8 0.8 L3.5 3.2 L6.2 0.8" stroke="#fff" stroke-width="1"/></svg>
<div class="a" style="left:289px;top:134.8px;font-size:11.4px;line-height:16px;font-weight:400;color:#2f3339;letter-spacing:0.02px">This list captures the specific, measurable outcomes linked to each Objective. These are defined during quarterly or annual planning to track progress and ensure</div>
<div class="a" style="left:289px;top:151.0px;font-size:11.4px;line-height:16px;font-weight:400;color:#2f3339;letter-spacing:0.02px">every Objective is achieved through clear, quantifiable targets.</div>
<div class="a" style="left:290px;top:175px;width:818px;height:1px;background:#ececef;"></div>
<div class="a" style="left:289px;top:183.5px;font-size:9px;line-height:13px;font-weight:400;color:#000;">🍿</div>
<div class="a" style="left:303px;top:182.0px;font-size:11.4px;line-height:16px;font-weight:400;color:#2f3339;">How to use this list</div>
<div class="a" style="left:404px;top:183.5px;font-size:9px;line-height:13px;font-weight:400;color:#000;">🤖</div>
<div class="a" style="left:419px;top:182.0px;font-size:11.4px;line-height:16px;font-weight:400;color:#2f3339;">Automations</div>
<svg class="a" style="left:270px;top:224.3px;" width="7" height="4" viewBox="0 0 7 4" fill="none"><path d="M0 0 H7 L3.5 4Z" fill="#7b8089"/></svg>
<div class="a" style="left:289px;top:217.3px;width:188px;height:18px;background:#f1f1f3;border-radius:5px;box-shadow:0 0.5px 1.5px rgba(0,0,0,0.04)"></div>
<svg class="a" style="left:293px;top:220.3px;" width="13" height="12" viewBox="0 0 13 12" fill="none"><path d="M1 1.8 Q1 0.5 2.3 0.6 L5 0.6 L11.6 5 Q12.4 6 11.6 7 L5 11.4 H2.3 Q1 11.5 1 10.2Z" fill="#7b8089"/></svg>
<div class="a" style="left:307px;top:218.3px;font-size:11.7px;line-height:16px;font-weight:400;color:#30343a;-webkit-text-stroke:0.18px currentColor;">Objective 1 – [Outline Objecti...</div>
<div class="a" style="left:489px;top:218.8px;font-size:10.5px;line-height:15px;font-weight:400;color:#8a8f98;">3</div>
<svg class="a" style="left:504.5px;top:224.8px;" width="11" height="3" viewBox="0 0 11 3" fill="none"><circle cx="1.5" cy="1.5" r="1.1" fill="#6b7079"/><circle cx="5.5" cy="1.5" r="1.1" fill="#6b7079"/><circle cx="9.5" cy="1.5" r="1.1" fill="#6b7079"/></svg>
<svg class="a" style="left:524px;top:222.3px;" width="8" height="8" viewBox="0 0 8 8" fill="none"><path d="M4.0 0 V8 M0 4.0 H8" stroke="#8a8f98" stroke-width="1"/></svg>
<div class="a" style="left:538px;top:219.3px;font-size:10px;line-height:14px;font-weight:400;color:#8a8f98;">Add Task</div>
<div class="a" style="left:292px;top:244.5px;font-size:9.8px;line-height:14px;font-weight:400;color:#8a8f98;letter-spacing:0.25px">Name</div>
<div class="a" style="left:573px;top:244.5px;font-size:9.8px;line-height:14px;font-weight:400;color:#8a8f98;letter-spacing:0.25px">Owner(s)</div>
<div class="a" style="left:651px;top:244.5px;font-size:9.8px;line-height:14px;font-weight:400;color:#8a8f98;letter-spacing:0.25px">Start date</div>
<div class="a" style="left:739px;top:244.5px;font-size:9.8px;line-height:14px;font-weight:400;color:#8a8f98;letter-spacing:0.25px">Duration</div>
<div class="a" style="left:833px;top:244.5px;font-size:9.8px;line-height:14px;font-weight:400;color:#8a8f98;letter-spacing:0.25px">Due date</div>
<div class="a" style="left:917px;top:244.5px;font-size:9.8px;line-height:14px;font-weight:400;color:#8a8f98;letter-spacing:0.25px">Priority</div>
<div class="a" style="left:998px;top:244.5px;font-size:9.8px;line-height:14px;font-weight:400;color:#8a8f98;letter-spacing:0.25px">Status</div>
<svg class="a" style="left:1122px;top:244.5px;" width="12" height="12" viewBox="0 0 12 12" fill="none"><circle cx="6" cy="6" r="5.3" stroke="#6b7079" stroke-width="1"/><path d="M6 3.2 V8.8 M3.2 6 H8.8" stroke="#6b7079" stroke-width="1"/></svg>
<svg class="a" style="left:311px;top:272.5px;" width="11" height="11" viewBox="0 0 11 11" fill="none"><g transform="scale(1.0)"><circle cx="3" cy="8" r="2.2" stroke="#7b8089" stroke-width="1.3"/><path d="M4.6 6.4 L9.6 1.4 M7.6 3.4 L9.2 5 M9 1.9 L10.4 3.3" stroke="#7b8089" stroke-width="1.3" stroke-linecap="round"/></g></svg>
<div class="a" style="left:333px;top:269.5px;font-size:11.2px;line-height:16px;font-weight:400;color:#2a2e34;-webkit-text-stroke:0.2px currentColor;">Key Result 1</div>
<svg class="a" style="left:574px;top:271.5px;" width="12" height="12" viewBox="0 0 12 12" fill="none"><path d="M2.6 5.8 A2.9 2.9 0 1 1 6.4 5.8 Q7.4 6.4 7.9 7.1 M2.6 5.8 Q0.8 7.2 0.8 10.6 H5.6" stroke="#7b8089" stroke-width="1.05" stroke-linejoin="round" stroke-linecap="round"/><path d="M9.3 7.9 V11.7 M7.4 9.8 H11.2" stroke="#7b8089" stroke-width="1.1"/></svg>
<svg class="a" style="left:652px;top:271.5px;" width="12" height="12" viewBox="0 0 12 12" fill="none"><path d="M6.4 10.6 H2.1 Q0.6 10.6 0.6 9.1 V3.6 Q0.6 2.1 2.1 2.1 H8.9 Q10.4 2.1 10.4 3.6 V6.6" stroke="#7b8089" stroke-width="1.05"/><path d="M2.4 2.4 Q2.4 0.7 3.8 0.7 Q5.2 0.7 5.2 2.4 M5.8 2.4 Q5.8 0.7 7.2 0.7 Q8.6 0.7 8.6 2.4" stroke="#7b8089" stroke-width="1"/><path d="M9.4 7.8 V11.6 M7.5 9.7 H11.3" stroke="#7b8089" stroke-width="1.1"/></svg>
<div class="a" style="left:749.5px;top:270.5px;font-size:10px;line-height:14px;font-weight:400;color:#6b7079;">–</div>
<svg class="a" style="left:834px;top:271.5px;" width="12" height="12" viewBox="0 0 12 12" fill="none"><path d="M6.4 10.6 H2.1 Q0.6 10.6 0.6 9.1 V3.6 Q0.6 2.1 2.1 2.1 H8.9 Q10.4 2.1 10.4 3.6 V6.6" stroke="#7b8089" stroke-width="1.05"/><path d="M2.4 2.4 Q2.4 0.7 3.8 0.7 Q5.2 0.7 5.2 2.4 M5.8 2.4 Q5.8 0.7 7.2 0.7 Q8.6 0.7 8.6 2.4" stroke="#7b8089" stroke-width="1"/><path d="M9.4 7.8 V11.6 M7.5 9.7 H11.3" stroke="#7b8089" stroke-width="1.1"/></svg>
<svg class="a" style="left:916px;top:271.5px;" width="11" height="12" viewBox="0 0 11 12" fill="none"><path d="M0.9 0.6 V11.6" stroke="#3b48d8" stroke-width="1.3"/><path d="M1 1 Q3 0 5 1 Q7 2 10 1 L8.8 4.2 L10 7.3 Q7 8.2 5 7.3 Q3 6.4 1 7.3Z" fill="#3b48d8"/></svg>
<div class="a" style="left:934px;top:269.5px;font-size:11.2px;line-height:16px;font-weight:400;color:#575c65;">Normal</div>
<div class="a" style="left:999px;top:268.5px;width:55px;height:18px;background:#f0f0f2;border-radius:5px"></div>
<svg class="a" style="left:1002.5px;top:272.0px;" width="11" height="11" viewBox="0 0 11 11" fill="none"><circle cx="5.5" cy="5.5" r="4.9" stroke="#6b7079" stroke-width="1.25" stroke-dasharray="2.3 1.55"/></svg>
<div class="a" style="left:1018px;top:270.5px;font-size:9.7px;line-height:14px;font-weight:700;color:#2a2e34;letter-spacing:0.1px">TO DO</div>
<div class="a" style="left:1123px;top:277.5px;width:7px;height:1px;background:#dcdde0;"></div>
<svg class="a" style="left:311px;top:299.8px;" width="11" height="11" viewBox="0 0 11 11" fill="none"><g transform="scale(1.0)"><circle cx="3" cy="8" r="2.2" stroke="#7b8089" stroke-width="1.3"/><path d="M4.6 6.4 L9.6 1.4 M7.6 3.4 L9.2 5 M9 1.9 L10.4 3.3" stroke="#7b8089" stroke-width="1.3" stroke-linecap="round"/></g></svg>
<div class="a" style="left:333px;top:296.8px;font-size:11.2px;line-height:16px;font-weight:400;color:#2a2e34;-webkit-text-stroke:0.2px currentColor;">Key Result 3</div>
<svg class="a" style="left:574px;top:298.8px;" width="12" height="12" viewBox="0 0 12 12" fill="none"><path d="M2.6 5.8 A2.9 2.9 0 1 1 6.4 5.8 Q7.4 6.4 7.9 7.1 M2.6 5.8 Q0.8 7.2 0.8 10.6 H5.6" stroke="#7b8089" stroke-width="1.05" stroke-linejoin="round" stroke-linecap="round"/><path d="M9.3 7.9 V11.7 M7.4 9.8 H11.2" stroke="#7b8089" stroke-width="1.1"/></svg>
<svg class="a" style="left:652px;top:298.8px;" width="12" height="12" viewBox="0 0 12 12" fill="none"><path d="M6.4 10.6 H2.1 Q0.6 10.6 0.6 9.1 V3.6 Q0.6 2.1 2.1 2.1 H8.9 Q10.4 2.1 10.4 3.6 V6.6" stroke="#7b8089" stroke-width="1.05"/><path d="M2.4 2.4 Q2.4 0.7 3.8 0.7 Q5.2 0.7 5.2 2.4 M5.8 2.4 Q5.8 0.7 7.2 0.7 Q8.6 0.7 8.6 2.4" stroke="#7b8089" stroke-width="1"/><path d="M9.4 7.8 V11.6 M7.5 9.7 H11.3" stroke="#7b8089" stroke-width="1.1"/></svg>
<div class="a" style="left:749.5px;top:297.8px;font-size:10px;line-height:14px;font-weight:400;color:#6b7079;">–</div>
<svg class="a" style="left:834px;top:298.8px;" width="12" height="12" viewBox="0 0 12 12" fill="none"><path d="M6.4 10.6 H2.1 Q0.6 10.6 0.6 9.1 V3.6 Q0.6 2.1 2.1 2.1 H8.9 Q10.4 2.1 10.4 3.6 V6.6" stroke="#7b8089" stroke-width="1.05"/><path d="M2.4 2.4 Q2.4 0.7 3.8 0.7 Q5.2 0.7 5.2 2.4 M5.8 2.4 Q5.8 0.7 7.2 0.7 Q8.6 0.7 8.6 2.4" stroke="#7b8089" stroke-width="1"/><path d="M9.4 7.8 V11.6 M7.5 9.7 H11.3" stroke="#7b8089" stroke-width="1.1"/></svg>
<svg class="a" style="left:916px;top:298.8px;" width="11" height="12" viewBox="0 0 11 12" fill="none"><path d="M0.9 0.6 V11.6" stroke="#3b48d8" stroke-width="1.3"/><path d="M1 1 Q3 0 5 1 Q7 2 10 1 L8.8 4.2 L10 7.3 Q7 8.2 5 7.3 Q3 6.4 1 7.3Z" fill="#3b48d8"/></svg>
<div class="a" style="left:934px;top:296.8px;font-size:11.2px;line-height:16px;font-weight:400;color:#575c65;">Normal</div>
<div class="a" style="left:999px;top:295.8px;width:55px;height:18px;background:#f0f0f2;border-radius:5px"></div>
<svg class="a" style="left:1002.5px;top:299.3px;" width="11" height="11" viewBox="0 0 11 11" fill="none"><circle cx="5.5" cy="5.5" r="4.9" stroke="#6b7079" stroke-width="1.25" stroke-dasharray="2.3 1.55"/></svg>
<div class="a" style="left:1018px;top:297.8px;font-size:9.7px;line-height:14px;font-weight:700;color:#2a2e34;letter-spacing:0.1px">TO DO</div>
<div class="a" style="left:1123px;top:304.8px;width:7px;height:1px;background:#dcdde0;"></div>
<svg class="a" style="left:311px;top:327.1px;" width="11" height="11" viewBox="0 0 11 11" fill="none"><g transform="scale(1.0)"><circle cx="3" cy="8" r="2.2" stroke="#7b8089" stroke-width="1.3"/><path d="M4.6 6.4 L9.6 1.4 M7.6 3.4 L9.2 5 M9 1.9 L10.4 3.3" stroke="#7b8089" stroke-width="1.3" stroke-linecap="round"/></g></svg>
<div class="a" style="left:333px;top:324.1px;font-size:11.2px;line-height:16px;font-weight:400;color:#2a2e34;-webkit-text-stroke:0.2px currentColor;">Key Result 2</div>
<svg class="a" style="left:574px;top:326.1px;" width="12" height="12" viewBox="0 0 12 12" fill="none"><path d="M2.6 5.8 A2.9 2.9 0 1 1 6.4 5.8 Q7.4 6.4 7.9 7.1 M2.6 5.8 Q0.8 7.2 0.8 10.6 H5.6" stroke="#7b8089" stroke-width="1.05" stroke-linejoin="round" stroke-linecap="round"/><path d="M9.3 7.9 V11.7 M7.4 9.8 H11.2" stroke="#7b8089" stroke-width="1.1"/></svg>
<svg class="a" style="left:652px;top:326.1px;" width="12" height="12" viewBox="0 0 12 12" fill="none"><path d="M6.4 10.6 H2.1 Q0.6 10.6 0.6 9.1 V3.6 Q0.6 2.1 2.1 2.1 H8.9 Q10.4 2.1 10.4 3.6 V6.6" stroke="#7b8089" stroke-width="1.05"/><path d="M2.4 2.4 Q2.4 0.7 3.8 0.7 Q5.2 0.7 5.2 2.4 M5.8 2.4 Q5.8 0.7 7.2 0.7 Q8.6 0.7 8.6 2.4" stroke="#7b8089" stroke-width="1"/><path d="M9.4 7.8 V11.6 M7.5 9.7 H11.3" stroke="#7b8089" stroke-width="1.1"/></svg>
<div class="a" style="left:749.5px;top:325.1px;font-size:10px;line-height:14px;font-weight:400;color:#6b7079;">–</div>
<svg class="a" style="left:834px;top:326.1px;" width="12" height="12" viewBox="0 0 12 12" fill="none"><path d="M6.4 10.6 H2.1 Q0.6 10.6 0.6 9.1 V3.6 Q0.6 2.1 2.1 2.1 H8.9 Q10.4 2.1 10.4 3.6 V6.6" stroke="#7b8089" stroke-width="1.05"/><path d="M2.4 2.4 Q2.4 0.7 3.8 0.7 Q5.2 0.7 5.2 2.4 M5.8 2.4 Q5.8 0.7 7.2 0.7 Q8.6 0.7 8.6 2.4" stroke="#7b8089" stroke-width="1"/><path d="M9.4 7.8 V11.6 M7.5 9.7 H11.3" stroke="#7b8089" stroke-width="1.1"/></svg>
<svg class="a" style="left:916px;top:326.1px;" width="11" height="12" viewBox="0 0 11 12" fill="none"><path d="M0.9 0.6 V11.6" stroke="#3b48d8" stroke-width="1.3"/><path d="M1 1 Q3 0 5 1 Q7 2 10 1 L8.8 4.2 L10 7.3 Q7 8.2 5 7.3 Q3 6.4 1 7.3Z" fill="#3b48d8"/></svg>
<div class="a" style="left:934px;top:324.1px;font-size:11.2px;line-height:16px;font-weight:400;color:#575c65;">Normal</div>
<div class="a" style="left:999px;top:323.1px;width:55px;height:18px;background:#f0f0f2;border-radius:5px"></div>
<svg class="a" style="left:1002.5px;top:326.6px;" width="11" height="11" viewBox="0 0 11 11" fill="none"><circle cx="5.5" cy="5.5" r="4.9" stroke="#6b7079" stroke-width="1.25" stroke-dasharray="2.3 1.55"/></svg>
<div class="a" style="left:1018px;top:325.1px;font-size:9.7px;line-height:14px;font-weight:700;color:#2a2e34;letter-spacing:0.1px">TO DO</div>
<div class="a" style="left:1123px;top:332.1px;width:7px;height:1px;background:#dcdde0;"></div>
<svg class="a" style="left:312px;top:356px;" width="9" height="9" viewBox="0 0 9 9" fill="none"><path d="M4.5 0 V9 M0 4.5 H9" stroke="#9a9ea5" stroke-width="1"/></svg>
<div class="a" style="left:333px;top:352.5px;font-size:11.2px;line-height:16px;font-weight:400;color:#8a8f98;">Add Task</div>
<svg class="a" style="left:270px;top:396.8px;" width="7" height="4" viewBox="0 0 7 4" fill="none"><path d="M0 0 H7 L3.5 4Z" fill="#7b8089"/></svg>
<div class="a" style="left:289px;top:389.8px;width:188px;height:18px;background:#f1f1f3;border-radius:5px;box-shadow:0 0.5px 1.5px rgba(0,0,0,0.04)"></div>
<svg class="a" style="left:293px;top:392.8px;" width="13" height="12" viewBox="0 0 13 12" fill="none"><path d="M1 1.8 Q1 0.5 2.3 0.6 L5 0.6 L11.6 5 Q12.4 6 11.6 7 L5 11.4 H2.3 Q1 11.5 1 10.2Z" fill="#7b8089"/></svg>
<div class="a" style="left:307px;top:390.8px;font-size:11.7px;line-height:16px;font-weight:400;color:#30343a;-webkit-text-stroke:0.18px currentColor;">Objective 2 – [Outline Objecti...</div>
<div class="a" style="left:489px;top:391.3px;font-size:10.5px;line-height:15px;font-weight:400;color:#8a8f98;">3</div>
<svg class="a" style="left:504.5px;top:397.3px;" width="11" height="3" viewBox="0 0 11 3" fill="none"><circle cx="1.5" cy="1.5" r="1.1" fill="#6b7079"/><circle cx="5.5" cy="1.5" r="1.1" fill="#6b7079"/><circle cx="9.5" cy="1.5" r="1.1" fill="#6b7079"/></svg>
<svg class="a" style="left:524px;top:394.8px;" width="8" height="8" viewBox="0 0 8 8" fill="none"><path d="M4.0 0 V8 M0 4.0 H8" stroke="#8a8f98" stroke-width="1"/></svg>
<div class="a" style="left:538px;top:391.8px;font-size:10px;line-height:14px;font-weight:400;color:#8a8f98;">Add Task</div>
<div class="a" style="left:292px;top:417.0px;font-size:9.8px;line-height:14px;font-weight:400;color:#8a8f98;letter-spacing:0.25px">Name</div>
<div class="a" style="left:573px;top:417.0px;font-size:9.8px;line-height:14px;font-weight:400;color:#8a8f98;letter-spacing:0.25px">Owner(s)</div>
<div class="a" style="left:651px;top:417.0px;font-size:9.8px;line-height:14px;font-weight:400;color:#8a8f98;letter-spacing:0.25px">Start date</div>
<div class="a" style="left:739px;top:417.0px;font-size:9.8px;line-height:14px;font-weight:400;color:#8a8f98;letter-spacing:0.25px">Duration</div>
<div class="a" style="left:833px;top:417.0px;font-size:9.8px;line-height:14px;font-weight:400;color:#8a8f98;letter-spacing:0.25px">Due date</div>
<div class="a" style="left:917px;top:417.0px;font-size:9.8px;line-height:14px;font-weight:400;color:#8a8f98;letter-spacing:0.25px">Priority</div>
<div class="a" style="left:998px;top:417.0px;font-size:9.8px;line-height:14px;font-weight:400;color:#8a8f98;letter-spacing:0.25px">Status</div>
<svg class="a" style="left:1122px;top:417px;" width="12" height="12" viewBox="0 0 12 12" fill="none"><circle cx="6" cy="6" r="5.3" stroke="#6b7079" stroke-width="1"/><path d="M6 3.2 V8.8 M3.2 6 H8.8" stroke="#6b7079" stroke-width="1"/></svg>
<svg class="a" style="left:311px;top:445.0px;" width="11" height="11" viewBox="0 0 11 11" fill="none"><g transform="scale(1.0)"><circle cx="3" cy="8" r="2.2" stroke="#7b8089" stroke-width="1.3"/><path d="M4.6 6.4 L9.6 1.4 M7.6 3.4 L9.2 5 M9 1.9 L10.4 3.3" stroke="#7b8089" stroke-width="1.3" stroke-linecap="round"/></g></svg>
<div class="a" style="left:333px;top:442.0px;font-size:11.2px;line-height:16px;font-weight:400;color:#2a2e34;-webkit-text-stroke:0.2px currentColor;">Key Result 1</div>
<svg class="a" style="left:574px;top:444.0px;" width="12" height="12" viewBox="0 0 12 12" fill="none"><path d="M2.6 5.8 A2.9 2.9 0 1 1 6.4 5.8 Q7.4 6.4 7.9 7.1 M2.6 5.8 Q0.8 7.2 0.8 10.6 H5.6" stroke="#7b8089" stroke-width="1.05" stroke-linejoin="round" stroke-linecap="round"/><path d="M9.3 7.9 V11.7 M7.4 9.8 H11.2" stroke="#7b8089" stroke-width="1.1"/></svg>
<svg class="a" style="left:652px;top:444.0px;" width="12" height="12" viewBox="0 0 12 12" fill="none"><path d="M6.4 10.6 H2.1 Q0.6 10.6 0.6 9.1 V3.6 Q0.6 2.1 2.1 2.1 H8.9 Q10.4 2.1 10.4 3.6 V6.6" stroke="#7b8089" stroke-width="1.05"/><path d="M2.4 2.4 Q2.4 0.7 3.8 0.7 Q5.2 0.7 5.2 2.4 M5.8 2.4 Q5.8 0.7 7.2 0.7 Q8.6 0.7 8.6 2.4" stroke="#7b8089" stroke-width="1"/><path d="M9.4 7.8 V11.6 M7.5 9.7 H11.3" stroke="#7b8089" stroke-width="1.1"/></svg>
<div class="a" style="left:739.5px;top:443.0px;font-size:10px;line-height:14px;font-weight:400;color:#6b7079;">–</div>
<svg class="a" style="left:834px;top:444.0px;" width="12" height="12" viewBox="0 0 12 12" fill="none"><path d="M6.4 10.6 H2.1 Q0.6 10.6 0.6 9.1 V3.6 Q0.6 2.1 2.1 2.1 H8.9 Q10.4 2.1 10.4 3.6 V6.6" stroke="#7b8089" stroke-width="1.05"/><path d="M2.4 2.4 Q2.4 0.7 3.8 0.7 Q5.2 0.7 5.2 2.4 M5.8 2.4 Q5.8 0.7 7.2 0.7 Q8.6 0.7 8.6 2.4" stroke="#7b8089" stroke-width="1"/><path d="M9.4 7.8 V11.6 M7.5 9.7 H11.3" stroke="#7b8089" stroke-width="1.1"/></svg>
<svg class="a" style="left:916px;top:444.0px;" width="11" height="12" viewBox="0 0 11 12" fill="none"><path d="M0.9 0.6 V11.6" stroke="#3b48d8" stroke-width="1.3"/><path d="M1 1 Q3 0 5 1 Q7 2 10 1 L8.8 4.2 L10 7.3 Q7 8.2 5 7.3 Q3 6.4 1 7.3Z" fill="#3b48d8"/></svg>
<div class="a" style="left:934px;top:442.0px;font-size:11.2px;line-height:16px;font-weight:400;color:#575c65;">Normal</div>
<div class="a" style="left:999px;top:441.0px;width:55px;height:18px;background:#f0f0f2;border-radius:5px"></div>
<svg class="a" style="left:1002.5px;top:444.5px;" width="11" height="11" viewBox="0 0 11 11" fill="none"><circle cx="5.5" cy="5.5" r="4.9" stroke="#6b7079" stroke-width="1.25" stroke-dasharray="2.3 1.55"/></svg>
<div class="a" style="left:1018px;top:443.0px;font-size:9.7px;line-height:14px;font-weight:700;color:#2a2e34;letter-spacing:0.1px">TO DO</div>
<div class="a" style="left:1123px;top:450.0px;width:7px;height:1px;background:#dcdde0;"></div>
<svg class="a" style="left:311px;top:472.3px;" width="11" height="11" viewBox="0 0 11 11" fill="none"><g transform="scale(1.0)"><circle cx="3" cy="8" r="2.2" stroke="#7b8089" stroke-width="1.3"/><path d="M4.6 6.4 L9.6 1.4 M7.6 3.4 L9.2 5 M9 1.9 L10.4 3.3" stroke="#7b8089" stroke-width="1.3" stroke-linecap="round"/></g></svg>
<div class="a" style="left:333px;top:469.3px;font-size:11.2px;line-height:16px;font-weight:400;color:#2a2e34;-webkit-text-stroke:0.2px currentColor;">Key Result 3</div>
<svg class="a" style="left:574px;top:471.3px;" width="12" height="12" viewBox="0 0 12 12" fill="none"><path d="M2.6 5.8 A2.9 2.9 0 1 1 6.4 5.8 Q7.4 6.4 7.9 7.1 M2.6 5.8 Q0.8 7.2 0.8 10.6 H5.6" stroke="#7b8089" stroke-width="1.05" stroke-linejoin="round" stroke-linecap="round"/><path d="M9.3 7.9 V11.7 M7.4 9.8 H11.2" stroke="#7b8089" stroke-width="1.1"/></svg>
<svg class="a" style="left:652px;top:471.3px;" width="12" height="12" viewBox="0 0 12 12" fill="none"><path d="M6.4 10.6 H2.1 Q0.6 10.6 0.6 9.1 V3.6 Q0.6 2.1 2.1 2.1 H8.9 Q10.4 2.1 10.4 3.6 V6.6" stroke="#7b8089" stroke-width="1.05"/><path d="M2.4 2.4 Q2.4 0.7 3.8 0.7 Q5.2 0.7 5.2 2.4 M5.8 2.4 Q5.8 0.7 7.2 0.7 Q8.6 0.7 8.6 2.4" stroke="#7b8089" stroke-width="1"/><path d="M9.4 7.8 V11.6 M7.5 9.7 H11.3" stroke="#7b8089" stroke-width="1.1"/></svg>
<div class="a" style="left:749.5px;top:470.3px;font-size:10px;line-height:14px;font-weight:400;color:#6b7079;">–</div>
<svg class="a" style="left:834px;top:471.3px;" width="12" height="12" viewBox="0 0 12 12" fill="none"><path d="M6.4 10.6 H2.1 Q0.6 10.6 0.6 9.1 V3.6 Q0.6 2.1 2.1 2.1 H8.9 Q10.4 2.1 10.4 3.6 V6.6" stroke="#7b8089" stroke-width="1.05"/><path d="M2.4 2.4 Q2.4 0.7 3.8 0.7 Q5.2 0.7 5.2 2.4 M5.8 2.4 Q5.8 0.7 7.2 0.7 Q8.6 0.7 8.6 2.4" stroke="#7b8089" stroke-width="1"/><path d="M9.4 7.8 V11.6 M7.5 9.7 H11.3" stroke="#7b8089" stroke-width="1.1"/></svg>
<svg class="a" style="left:916px;top:471.3px;" width="11" height="12" viewBox="0 0 11 12" fill="none"><path d="M0.9 0.6 V11.6" stroke="#3b48d8" stroke-width="1.3"/><path d="M1 1 Q3 0 5 1 Q7 2 10 1 L8.8 4.2 L10 7.3 Q7 8.2 5 7.3 Q3 6.4 1 7.3Z" fill="#3b48d8"/></svg>
<div class="a" style="left:934px;top:469.3px;font-size:11.2px;line-height:16px;font-weight:400;color:#575c65;">Normal</div>
<div class="a" style="left:999px;top:468.3px;width:55px;height:18px;background:#f0f0f2;border-radius:5px"></div>
<svg class="a" style="left:1002.5px;top:471.8px;" width="11" height="11" viewBox="0 0 11 11" fill="none"><circle cx="5.5" cy="5.5" r="4.9" stroke="#6b7079" stroke-width="1.25" stroke-dasharray="2.3 1.55"/></svg>
<div class="a" style="left:1018px;top:470.3px;font-size:9.7px;line-height:14px;font-weight:700;color:#2a2e34;letter-spacing:0.1px">TO DO</div>
<div class="a" style="left:1123px;top:477.3px;width:7px;height:1px;background:#dcdde0;"></div>
<svg class="a" style="left:311px;top:499.6px;" width="11" height="11" viewBox="0 0 11 11" fill="none"><g transform="scale(1.0)"><circle cx="3" cy="8" r="2.2" stroke="#7b8089" stroke-width="1.3"/><path d="M4.6 6.4 L9.6 1.4 M7.6 3.4 L9.2 5 M9 1.9 L10.4 3.3" stroke="#7b8089" stroke-width="1.3" stroke-linecap="round"/></g></svg>
<div class="a" style="left:333px;top:496.6px;font-size:11.2px;line-height:16px;font-weight:400;color:#2a2e34;-webkit-text-stroke:0.2px currentColor;">Key Result 2</div>
<svg class="a" style="left:574px;top:498.6px;" width="12" height="12" viewBox="0 0 12 12" fill="none"><path d="M2.6 5.8 A2.9 2.9 0 1 1 6.4 5.8 Q7.4 6.4 7.9 7.1 M2.6 5.8 Q0.8 7.2 0.8 10.6 H5.6" stroke="#7b8089" stroke-width="1.05" stroke-linejoin="round" stroke-linecap="round"/><path d="M9.3 7.9 V11.7 M7.4 9.8 H11.2" stroke="#7b8089" stroke-width="1.1"/></svg>
<svg class="a" style="left:652px;top:498.6px;" width="12" height="12" viewBox="0 0 12 12" fill="none"><path d="M6.4 10.6 H2.1 Q0.6 10.6 0.6 9.1 V3.6 Q0.6 2.1 2.1 2.1 H8.9 Q10.4 2.1 10.4 3.6 V6.6" stroke="#7b8089" stroke-width="1.05"/><path d="M2.4 2.4 Q2.4 0.7 3.8 0.7 Q5.2 0.7 5.2 2.4 M5.8 2.4 Q5.8 0.7 7.2 0.7 Q8.6 0.7 8.6 2.4" stroke="#7b8089" stroke-width="1"/><path d="M9.4 7.8 V11.6 M7.5 9.7 H11.3" stroke="#7b8089" stroke-width="1.1"/></svg>
<div class="a" style="left:739.5px;top:497.6px;font-size:10px;line-height:14px;font-weight:400;color:#6b7079;">–</div>
<svg class="a" style="left:834px;top:498.6px;" width="12" height="12" viewBox="0 0 12 12" fill="none"><path d="M6.4 10.6 H2.1 Q0.6 10.6 0.6 9.1 V3.6 Q0.6 2.1 2.1 2.1 H8.9 Q10.4 2.1 10.4 3.6 V6.6" stroke="#7b8089" stroke-width="1.05"/><path d="M2.4 2.4 Q2.4 0.7 3.8 0.7 Q5.2 0.7 5.2 2.4 M5.8 2.4 Q5.8 0.7 7.2 0.7 Q8.6 0.7 8.6 2.4" stroke="#7b8089" stroke-width="1"/><path d="M9.4 7.8 V11.6 M7.5 9.7 H11.3" stroke="#7b8089" stroke-width="1.1"/></svg>
<svg class="a" style="left:916px;top:498.6px;" width="11" height="12" viewBox="0 0 11 12" fill="none"><path d="M0.9 0.6 V11.6" stroke="#3b48d8" stroke-width="1.3"/><path d="M1 1 Q3 0 5 1 Q7 2 10 1 L8.8 4.2 L10 7.3 Q7 8.2 5 7.3 Q3 6.4 1 7.3Z" fill="#3b48d8"/></svg>
<div class="a" style="left:934px;top:496.6px;font-size:11.2px;line-height:16px;font-weight:400;color:#575c65;">Normal</div>
<div class="a" style="left:999px;top:495.6px;width:55px;height:18px;background:#f0f0f2;border-radius:5px"></div>
<svg class="a" style="left:1002.5px;top:499.1px;" width="11" height="11" viewBox="0 0 11 11" fill="none"><circle cx="5.5" cy="5.5" r="4.9" stroke="#6b7079" stroke-width="1.25" stroke-dasharray="2.3 1.55"/></svg>
<div class="a" style="left:1018px;top:497.6px;font-size:9.7px;line-height:14px;font-weight:700;color:#2a2e34;letter-spacing:0.1px">TO DO</div>
<div class="a" style="left:1123px;top:504.6px;width:7px;height:1px;background:#dcdde0;"></div>
<svg class="a" style="left:312px;top:528px;" width="9" height="9" viewBox="0 0 9 9" fill="none"><path d="M4.5 0 V9 M0 4.5 H9" stroke="#9a9ea5" stroke-width="1"/></svg>
<div class="a" style="left:333px;top:524.5px;font-size:11.2px;line-height:16px;font-weight:400;color:#8a8f98;">Add Task</div>
<svg class="a" style="left:270px;top:569.0px;" width="7" height="4" viewBox="0 0 7 4" fill="none"><path d="M0 0 H7 L3.5 4Z" fill="#7b8089"/></svg>
<div class="a" style="left:289px;top:562.0px;width:188px;height:18px;background:#f1f1f3;border-radius:5px;box-shadow:0 0.5px 1.5px rgba(0,0,0,0.04)"></div>
<svg class="a" style="left:293px;top:565.0px;" width="13" height="12" viewBox="0 0 13 12" fill="none"><path d="M1 1.8 Q1 0.5 2.3 0.6 L5 0.6 L11.6 5 Q12.4 6 11.6 7 L5 11.4 H2.3 Q1 11.5 1 10.2Z" fill="#7b8089"/></svg>
<div class="a" style="left:307px;top:563.0px;font-size:11.7px;line-height:16px;font-weight:400;color:#30343a;-webkit-text-stroke:0.18px currentColor;">Objective 3 – [Outline Objecti...</div>
<div class="a" style="left:489px;top:563.5px;font-size:10.5px;line-height:15px;font-weight:400;color:#8a8f98;">3</div>
<svg class="a" style="left:504.5px;top:569.5px;" width="11" height="3" viewBox="0 0 11 3" fill="none"><circle cx="1.5" cy="1.5" r="1.1" fill="#6b7079"/><circle cx="5.5" cy="1.5" r="1.1" fill="#6b7079"/><circle cx="9.5" cy="1.5" r="1.1" fill="#6b7079"/></svg>
<svg class="a" style="left:524px;top:567.0px;" width="8" height="8" viewBox="0 0 8 8" fill="none"><path d="M4.0 0 V8 M0 4.0 H8" stroke="#8a8f98" stroke-width="1"/></svg>
<div class="a" style="left:538px;top:564.0px;font-size:10px;line-height:14px;font-weight:400;color:#8a8f98;">Add Task</div>
<div class="a" style="left:292px;top:589.2px;font-size:9.8px;line-height:14px;font-weight:400;color:#8a8f98;letter-spacing:0.25px">Name</div>
<div class="a" style="left:573px;top:589.2px;font-size:9.8px;line-height:14px;font-weight:400;color:#8a8f98;letter-spacing:0.25px">Owner(s)</div>
<div class="a" style="left:651px;top:589.2px;font-size:9.8px;line-height:14px;font-weight:400;color:#8a8f98;letter-spacing:0.25px">Start date</div>
<div class="a" style="left:739px;top:589.2px;font-size:9.8px;line-height:14px;font-weight:400;color:#8a8f98;letter-spacing:0.25px">Duration</div>
<div class="a" style="left:833px;top:589.2px;font-size:9.8px;line-height:14px;font-weight:400;color:#8a8f98;letter-spacing:0.25px">Due date</div>
<div class="a" style="left:917px;top:589.2px;font-size:9.8px;line-height:14px;font-weight:400;color:#8a8f98;letter-spacing:0.25px">Priority</div>
<div class="a" style="left:998px;top:589.2px;font-size:9.8px;line-height:14px;font-weight:400;color:#8a8f98;letter-spacing:0.25px">Status</div>
<svg class="a" style="left:1122px;top:589.2px;" width="12" height="12" viewBox="0 0 12 12" fill="none"><circle cx="6" cy="6" r="5.3" stroke="#6b7079" stroke-width="1"/><path d="M6 3.2 V8.8 M3.2 6 H8.8" stroke="#6b7079" stroke-width="1"/></svg>
<svg class="a" style="left:311px;top:617.2px;" width="11" height="11" viewBox="0 0 11 11" fill="none"><g transform="scale(1.0)"><circle cx="3" cy="8" r="2.2" stroke="#7b8089" stroke-width="1.3"/><path d="M4.6 6.4 L9.6 1.4 M7.6 3.4 L9.2 5 M9 1.9 L10.4 3.3" stroke="#7b8089" stroke-width="1.3" stroke-linecap="round"/></g></svg>
<div class="a" style="left:333px;top:614.2px;font-size:11.2px;line-height:16px;font-weight:400;color:#2a2e34;-webkit-text-stroke:0.2px currentColor;">Key Result 1</div>
<svg class="a" style="left:574px;top:616.2px;" width="12" height="12" viewBox="0 0 12 12" fill="none"><path d="M2.6 5.8 A2.9 2.9 0 1 1 6.4 5.8 Q7.4 6.4 7.9 7.1 M2.6 5.8 Q0.8 7.2 0.8 10.6 H5.6" stroke="#7b8089" stroke-width="1.05" stroke-linejoin="round" stroke-linecap="round"/><path d="M9.3 7.9 V11.7 M7.4 9.8 H11.2" stroke="#7b8089" stroke-width="1.1"/></svg>
<svg class="a" style="left:652px;top:616.2px;" width="12" height="12" viewBox="0 0 12 12" fill="none"><path d="M6.4 10.6 H2.1 Q0.6 10.6 0.6 9.1 V3.6 Q0.6 2.1 2.1 2.1 H8.9 Q10.4 2.1 10.4 3.6 V6.6" stroke="#7b8089" stroke-width="1.05"/><path d="M2.4 2.4 Q2.4 0.7 3.8 0.7 Q5.2 0.7 5.2 2.4 M5.8 2.4 Q5.8 0.7 7.2 0.7 Q8.6 0.7 8.6 2.4" stroke="#7b8089" stroke-width="1"/><path d="M9.4 7.8 V11.6 M7.5 9.7 H11.3" stroke="#7b8089" stroke-width="1.1"/></svg>
<div class="a" style="left:749.5px;top:615.2px;font-size:10px;line-height:14px;font-weight:400;color:#6b7079;">–</div>
<svg class="a" style="left:834px;top:616.2px;" width="12" height="12" viewBox="0 0 12 12" fill="none"><path d="M6.4 10.6 H2.1 Q0.6 10.6 0.6 9.1 V3.6 Q0.6 2.1 2.1 2.1 H8.9 Q10.4 2.1 10.4 3.6 V6.6" stroke="#7b8089" stroke-width="1.05"/><path d="M2.4 2.4 Q2.4 0.7 3.8 0.7 Q5.2 0.7 5.2 2.4 M5.8 2.4 Q5.8 0.7 7.2 0.7 Q8.6 0.7 8.6 2.4" stroke="#7b8089" stroke-width="1"/><path d="M9.4 7.8 V11.6 M7.5 9.7 H11.3" stroke="#7b8089" stroke-width="1.1"/></svg>
<svg class="a" style="left:916px;top:616.2px;" width="11" height="12" viewBox="0 0 11 12" fill="none"><path d="M0.9 0.6 V11.6" stroke="#3b48d8" stroke-width="1.3"/><path d="M1 1 Q3 0 5 1 Q7 2 10 1 L8.8 4.2 L10 7.3 Q7 8.2 5 7.3 Q3 6.4 1 7.3Z" fill="#3b48d8"/></svg>
<div class="a" style="left:934px;top:614.2px;font-size:11.2px;line-height:16px;font-weight:400;color:#575c65;">Normal</div>
<div class="a" style="left:999px;top:613.2px;width:55px;height:18px;background:#f0f0f2;border-radius:5px"></div>
<svg class="a" style="left:1002.5px;top:616.7px;" width="11" height="11" viewBox="0 0 11 11" fill="none"><circle cx="5.5" cy="5.5" r="4.9" stroke="#6b7079" stroke-width="1.25" stroke-dasharray="2.3 1.55"/></svg>
<div class="a" style="left:1018px;top:615.2px;font-size:9.7px;line-height:14px;font-weight:700;color:#2a2e34;letter-spacing:0.1px">TO DO</div>
<div class="a" style="left:1123px;top:622.2px;width:7px;height:1px;background:#dcdde0;"></div>
<svg class="a" style="left:311px;top:644.5px;" width="11" height="11" viewBox="0 0 11 11" fill="none"><g transform="scale(1.0)"><circle cx="3" cy="8" r="2.2" stroke="#7b8089" stroke-width="1.3"/><path d="M4.6 6.4 L9.6 1.4 M7.6 3.4 L9.2 5 M9 1.9 L10.4 3.3" stroke="#7b8089" stroke-width="1.3" stroke-linecap="round"/></g></svg>
<div class="a" style="left:333px;top:641.5px;font-size:11.2px;line-height:16px;font-weight:400;color:#2a2e34;-webkit-text-stroke:0.2px currentColor;">Key Result 3</div>
<svg class="a" style="left:574px;top:643.5px;" width="12" height="12" viewBox="0 0 12 12" fill="none"><path d="M2.6 5.8 A2.9 2.9 0 1 1 6.4 5.8 Q7.4 6.4 7.9 7.1 M2.6 5.8 Q0.8 7.2 0.8 10.6 H5.6" stroke="#7b8089" stroke-width="1.05" stroke-linejoin="round" stroke-linecap="round"/><path d="M9.3 7.9 V11.7 M7.4 9.8 H11.2" stroke="#7b8089" stroke-width="1.1"/></svg>
<svg class="a" style="left:652px;top:643.5px;" width="12" height="12" viewBox="0 0 12 12" fill="none"><path d="M6.4 10.6 H2.1 Q0.6 10.6 0.6 9.1 V3.6 Q0.6 2.1 2.1 2.1 H8.9 Q10.4 2.1 10.4 3.6 V6.6" stroke="#7b8089" stroke-width="1.05"/><path d="M2.4 2.4 Q2.4 0.7 3.8 0.7 Q5.2 0.7 5.2 2.4 M5.8 2.4 Q5.8 0.7 7.2 0.7 Q8.6 0.7 8.6 2.4" stroke="#7b8089" stroke-width="1"/><path d="M9.4 7.8 V11.6 M7.5 9.7 H11.3" stroke="#7b8089" stroke-width="1.1"/></svg>
<div class="a" style="left:749.5px;top:642.5px;font-size:10px;line-height:14px;font-weight:400;color:#6b7079;">–</div>
<svg class="a" style="left:834px;top:643.5px;" width="12" height="12" viewBox="0 0 12 12" fill="none"><path d="M6.4 10.6 H2.1 Q0.6 10.6 0.6 9.1 V3.6 Q0.6 2.1 2.1 2.1 H8.9 Q10.4 2.1 10.4 3.6 V6.6" stroke="#7b8089" stroke-width="1.05"/><path d="M2.4 2.4 Q2.4 0.7 3.8 0.7 Q5.2 0.7 5.2 2.4 M5.8 2.4 Q5.8 0.7 7.2 0.7 Q8.6 0.7 8.6 2.4" stroke="#7b8089" stroke-width="1"/><path d="M9.4 7.8 V11.6 M7.5 9.7 H11.3" stroke="#7b8089" stroke-width="1.1"/></svg>
<svg class="a" style="left:916px;top:643.5px;" width="11" height="12" viewBox="0 0 11 12" fill="none"><path d="M0.9 0.6 V11.6" stroke="#3b48d8" stroke-width="1.3"/><path d="M1 1 Q3 0 5 1 Q7 2 10 1 L8.8 4.2 L10 7.3 Q7 8.2 5 7.3 Q3 6.4 1 7.3Z" fill="#3b48d8"/></svg>
<div class="a" style="left:934px;top:641.5px;font-size:11.2px;line-height:16px;font-weight:400;color:#575c65;">Normal</div>
<div class="a" style="left:999px;top:640.5px;width:55px;height:18px;background:#f0f0f2;border-radius:5px"></div>
<svg class="a" style="left:1002.5px;top:644.0px;" width="11" height="11" viewBox="0 0 11 11" fill="none"><circle cx="5.5" cy="5.5" r="4.9" stroke="#6b7079" stroke-width="1.25" stroke-dasharray="2.3 1.55"/></svg>
<div class="a" style="left:1018px;top:642.5px;font-size:9.7px;line-height:14px;font-weight:700;color:#2a2e34;letter-spacing:0.1px">TO DO</div>
<div class="a" style="left:1123px;top:649.5px;width:7px;height:1px;background:#dcdde0;"></div>
<svg class="a" style="left:311px;top:671.8000000000001px;" width="11" height="11" viewBox="0 0 11 11" fill="none"><g transform="scale(1.0)"><circle cx="3" cy="8" r="2.2" stroke="#7b8089" stroke-width="1.3"/><path d="M4.6 6.4 L9.6 1.4 M7.6 3.4 L9.2 5 M9 1.9 L10.4 3.3" stroke="#7b8089" stroke-width="1.3" stroke-linecap="round"/></g></svg>
<div class="a" style="left:333px;top:668.8px;font-size:11.2px;line-height:16px;font-weight:400;color:#2a2e34;-webkit-text-stroke:0.2px currentColor;">Key Result 2</div>
<svg class="a" style="left:574px;top:670.8000000000001px;" width="12" height="12" viewBox="0 0 12 12" fill="none"><path d="M2.6 5.8 A2.9 2.9 0 1 1 6.4 5.8 Q7.4 6.4 7.9 7.1 M2.6 5.8 Q0.8 7.2 0.8 10.6 H5.6" stroke="#7b8089" stroke-width="1.05" stroke-linejoin="round" stroke-linecap="round"/><path d="M9.3 7.9 V11.7 M7.4 9.8 H11.2" stroke="#7b8089" stroke-width="1.1"/></svg>
<svg class="a" style="left:652px;top:670.8000000000001px;" width="12" height="12" viewBox="0 0 12 12" fill="none"><path d="M6.4 10.6 H2.1 Q0.6 10.6 0.6 9.1 V3.6 Q0.6 2.1 2.1 2.1 H8.9 Q10.4 2.1 10.4 3.6 V6.6" stroke="#7b8089" stroke-width="1.05"/><path d="M2.4 2.4 Q2.4 0.7 3.8 0.7 Q5.2 0.7 5.2 2.4 M5.8 2.4 Q5.8 0.7 7.2 0.7 Q8.6 0.7 8.6 2.4" stroke="#7b8089" stroke-width="1"/><path d="M9.4 7.8 V11.6 M7.5 9.7 H11.3" stroke="#7b8089" stroke-width="1.1"/></svg>
<div class="a" style="left:749.5px;top:669.8px;font-size:10px;line-height:14px;font-weight:400;color:#6b7079;">–</div>
<svg class="a" style="left:834px;top:670.8000000000001px;" width="12" height="12" viewBox="0 0 12 12" fill="none"><path d="M6.4 10.6 H2.1 Q0.6 10.6 0.6 9.1 V3.6 Q0.6 2.1 2.1 2.1 H8.9 Q10.4 2.1 10.4 3.6 V6.6" stroke="#7b8089" stroke-width="1.05"/><path d="M2.4 2.4 Q2.4 0.7 3.8 0.7 Q5.2 0.7 5.2 2.4 M5.8 2.4 Q5.8 0.7 7.2 0.7 Q8.6 0.7 8.6 2.4" stroke="#7b8089" stroke-width="1"/><path d="M9.4 7.8 V11.6 M7.5 9.7 H11.3" stroke="#7b8089" stroke-width="1.1"/></svg>
<svg class="a" style="left:916px;top:670.8000000000001px;" width="11" height="12" viewBox="0 0 11 12" fill="none"><path d="M0.9 0.6 V11.6" stroke="#3b48d8" stroke-width="1.3"/><path d="M1 1 Q3 0 5 1 Q7 2 10 1 L8.8 4.2 L10 7.3 Q7 8.2 5 7.3 Q3 6.4 1 7.3Z" fill="#3b48d8"/></svg>
<div class="a" style="left:934px;top:668.8px;font-size:11.2px;line-height:16px;font-weight:400;color:#575c65;">Normal</div>
<div class="a" style="left:999px;top:667.8000000000001px;width:55px;height:18px;background:#f0f0f2;border-radius:5px"></div>
<svg class="a" style="left:1002.5px;top:671.3000000000001px;" width="11" height="11" viewBox="0 0 11 11" fill="none"><circle cx="5.5" cy="5.5" r="4.9" stroke="#6b7079" stroke-width="1.25" stroke-dasharray="2.3 1.55"/></svg>
<div class="a" style="left:1018px;top:669.8px;font-size:9.7px;line-height:14px;font-weight:700;color:#2a2e34;letter-spacing:0.1px">TO DO</div>
<div class="a" style="left:1123px;top:676.8000000000001px;width:7px;height:1px;background:#dcdde0;"></div>
<svg class="a" style="left:768px;top:382px;" width="9" height="13" viewBox="0 0 9 13" fill="none"><path d="M1 1 V10.5 L3.4 8.3 L5 12 L6.6 11.3 L5 7.7 H8.2Z" fill="#000" stroke="#fff" stroke-width="0.8" stroke-linejoin="round"/></svg>
<div class="a" style="left:252px;top:686px;width:900px;height:29px;background:#f9f9fa;"></div>
<div class="a" style="left:52px;top:686px;width:200px;height:29px;background:#f9f9fa;"></div>
<svg class="a" style="left:61px;top:695px;" width="10" height="11" viewBox="0 0 10 11" fill="none"><path d="M1 11 V1 H9 L7.5 4 L9 7 H1" stroke="#7b8089" stroke-width="1.1" stroke-linejoin="round"/></svg>
<div class="a" style="left:74px;top:692.5px;font-size:10.4px;line-height:15px;font-weight:400;color:#3a3e44;-webkit-text-stroke:0.3px currentColor;">4 Priorities</div>
<div class="a" style="left:130px;top:693px;width:1px;height:14px;background:#e3e3e6;"></div>
<div class="a" style="left:52px;top:685px;width:1100px;height:1px;background:#ececee;"></div>
<div class="a" style="left:52px;top:715px;width:1100px;height:1px;background:#f0f0f2;"></div></body></html>
